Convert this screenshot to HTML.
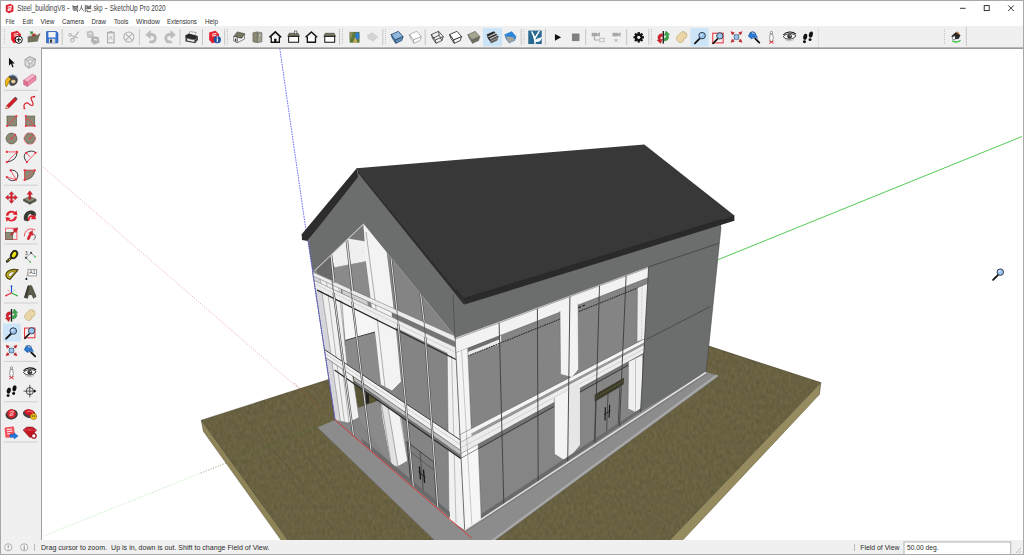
<!DOCTYPE html>
<html><head><meta charset="utf-8"><title>SketchUp</title>
<style>
html,body{margin:0;padding:0}
body{width:1024px;height:555px;overflow:hidden;position:relative;background:#fff;font-family:"Liberation Sans",sans-serif;}
.abs{position:absolute}
</style></head><body>
<div class="abs" style="left:0;top:0;width:1024px;height:26px;background:#fff"></div>
<div class="abs" style="left:0;top:26px;width:1024px;height:22px;background:#f0f0f0"></div>
<div class="abs" style="left:0;top:48px;width:41px;height:507px;background:#f0f0f0"></div>
<div class="abs" style="left:0;top:540px;width:1024px;height:15px;background:#f0f0f0"></div>
<div class="abs" style="left:0;top:47px;width:1024px;height:1px;background:#e3e3e3"></div><div class="abs" style="left:41px;top:47px;width:983px;height:1px;background:#b8b8b8"></div><div class="abs" style="left:41px;top:48px;width:983px;height:1px;background:#9a9a9a"></div>
<div class="abs" style="left:41px;top:48px;width:1px;height:492px;background:#a0a0a0"></div>
<svg width="1024" height="555" viewBox="0 0 1024 555" style="position:absolute;left:0;top:0">
<defs><clipPath id="woodclip"><polygon points="201.3,420.2 573.5,301.3 820.9,382.6 664.2,546.0 292.2,546.0"/></clipPath><clipPath id="vp"><rect x="42" y="49" width="980" height="491"/></clipPath>
<filter id="woodf" x="0" y="0" width="100%" height="100%" color-interpolation-filters="sRGB">
<feTurbulence type="fractalNoise" baseFrequency="0.35 0.2" numOctaves="2" seed="7" result="n"/>
<feColorMatrix in="n" type="matrix" values="0.10 0 0 0 0.36  0.095 0 0 0 0.333  0.06 0 0 0 0.225  0 0 0 0 1" result="c"/>
<feComposite in="c" in2="SourceGraphic" operator="in"/>
</filter>
</defs>
<g clip-path="url(#vp)">
<line x1="279.8" y1="48.6" x2="306.8" y2="236.0" stroke="#5b5bf0" stroke-width="0.9" stroke-dasharray="1.6 1"/>
<line x1="717.8" y1="259.8" x2="1024.0" y2="135.7" stroke="#55cc55" stroke-width="1.0" />
<line x1="41.0" y1="165.2" x2="335.0" y2="420.0" stroke="#ee8f8f" stroke-width="0.8" stroke-dasharray="1 1.6"/>
<line x1="41.0" y1="537.0" x2="201.0" y2="473.0" stroke="#9fe09f" stroke-width="0.8" stroke-dasharray="1 1.6"/>
<polygon points="201.3,420.2 573.5,301.3 820.9,382.6 664.2,546.0 292.2,546.0" fill="#625c3b" filter="url(#woodf)"/>
<g clip-path="url(#woodclip)">
<line x1="517.9" y1="587.8" x2="642.8" y2="699.0" stroke="#57513a" stroke-width="0.8" opacity="0.28"/>
<line x1="456.6" y1="678.3" x2="508.0" y2="739.4" stroke="#57513a" stroke-width="0.8" opacity="0.28"/>
<line x1="169.2" y1="356.8" x2="239.6" y2="447.8" stroke="#7a7350" stroke-width="0.8" opacity="0.28"/>
<line x1="237.8" y1="270.8" x2="305.2" y2="313.7" stroke="#7a7350" stroke-width="0.8" opacity="0.28"/>
<line x1="278.1" y1="304.4" x2="427.2" y2="403.1" stroke="#767050" stroke-width="0.8" opacity="0.28"/>
<line x1="672.4" y1="414.2" x2="729.2" y2="439.6" stroke="#767050" stroke-width="0.8" opacity="0.28"/>
<line x1="202.5" y1="198.4" x2="367.9" y2="268.0" stroke="#7a7350" stroke-width="0.8" opacity="0.28"/>
<line x1="562.7" y1="744.4" x2="607.7" y2="793.3" stroke="#7a7350" stroke-width="0.8" opacity="0.28"/>
<line x1="736.3" y1="525.1" x2="846.8" y2="586.3" stroke="#7a7350" stroke-width="0.8" opacity="0.28"/>
<line x1="768.8" y1="471.4" x2="833.6" y2="501.5" stroke="#767050" stroke-width="0.8" opacity="0.28"/>
<line x1="393.5" y1="338.6" x2="451.5" y2="371.3" stroke="#7a7350" stroke-width="0.8" opacity="0.28"/>
<line x1="382.1" y1="319.8" x2="532.9" y2="400.1" stroke="#57513a" stroke-width="0.8" opacity="0.28"/>
<line x1="509.7" y1="563.5" x2="548.1" y2="596.4" stroke="#5f593d" stroke-width="0.8" opacity="0.28"/>
<line x1="339.3" y1="526.2" x2="398.5" y2="594.6" stroke="#767050" stroke-width="0.8" opacity="0.28"/>
<line x1="266.0" y1="315.0" x2="331.6" y2="362.6" stroke="#57513a" stroke-width="0.8" opacity="0.28"/>
<line x1="254.1" y1="491.7" x2="315.5" y2="576.4" stroke="#767050" stroke-width="0.8" opacity="0.28"/>
<line x1="502.4" y1="432.0" x2="537.6" y2="453.9" stroke="#57513a" stroke-width="0.8" opacity="0.28"/>
<line x1="435.3" y1="563.6" x2="571.8" y2="699.6" stroke="#57513a" stroke-width="0.8" opacity="0.28"/>
<line x1="556.7" y1="722.9" x2="687.4" y2="861.7" stroke="#5f593d" stroke-width="0.8" opacity="0.28"/>
<line x1="629.9" y1="606.1" x2="693.5" y2="654.9" stroke="#767050" stroke-width="0.8" opacity="0.28"/>
<line x1="653.3" y1="378.1" x2="808.6" y2="441.2" stroke="#5f593d" stroke-width="0.8" opacity="0.28"/>
<line x1="786.7" y1="388.1" x2="838.2" y2="406.3" stroke="#5f593d" stroke-width="0.8" opacity="0.28"/>
<line x1="356.4" y1="396.6" x2="406.9" y2="435.4" stroke="#5f593d" stroke-width="0.8" opacity="0.28"/>
<line x1="333.7" y1="584.4" x2="387.7" y2="656.4" stroke="#5f593d" stroke-width="0.8" opacity="0.28"/>
<line x1="639.6" y1="481.3" x2="761.5" y2="550.7" stroke="#5f593d" stroke-width="0.8" opacity="0.28"/>
<line x1="170.1" y1="394.9" x2="196.9" y2="434.4" stroke="#767050" stroke-width="0.8" opacity="0.28"/>
<line x1="661.6" y1="341.6" x2="751.4" y2="372.9" stroke="#5f593d" stroke-width="0.8" opacity="0.28"/>
<line x1="398.7" y1="404.0" x2="438.6" y2="432.3" stroke="#57513a" stroke-width="0.8" opacity="0.28"/>
<line x1="280.8" y1="450.7" x2="329.3" y2="505.5" stroke="#7a7350" stroke-width="0.8" opacity="0.28"/>
<line x1="537.8" y1="610.6" x2="580.3" y2="648.7" stroke="#767050" stroke-width="0.8" opacity="0.28"/>
<line x1="214.9" y1="254.5" x2="305.8" y2="311.6" stroke="#7a7350" stroke-width="0.8" opacity="0.28"/>
<line x1="705.9" y1="619.8" x2="850.0" y2="721.5" stroke="#767050" stroke-width="0.8" opacity="0.28"/>
<line x1="376.3" y1="668.9" x2="429.1" y2="742.9" stroke="#5f593d" stroke-width="0.8" opacity="0.28"/>
<line x1="419.0" y1="349.9" x2="474.4" y2="380.7" stroke="#767050" stroke-width="0.8" opacity="0.28"/>
<line x1="359.9" y1="552.2" x2="404.8" y2="604.2" stroke="#767050" stroke-width="0.8" opacity="0.28"/>
<line x1="202.1" y1="386.2" x2="276.9" y2="478.4" stroke="#5f593d" stroke-width="0.8" opacity="0.28"/>
<line x1="689.8" y1="368.3" x2="780.6" y2="402.1" stroke="#57513a" stroke-width="0.8" opacity="0.28"/>
<line x1="303.4" y1="455.8" x2="407.8" y2="567.3" stroke="#5f593d" stroke-width="0.8" opacity="0.28"/>
<line x1="243.8" y1="423.2" x2="371.1" y2="573.4" stroke="#5f593d" stroke-width="0.8" opacity="0.28"/>
<line x1="245.5" y1="483.8" x2="285.4" y2="539.6" stroke="#57513a" stroke-width="0.8" opacity="0.28"/>
<line x1="579.9" y1="543.8" x2="654.5" y2="598.0" stroke="#5f593d" stroke-width="0.8" opacity="0.28"/>
<line x1="606.0" y1="555.5" x2="722.7" y2="639.0" stroke="#5f593d" stroke-width="0.8" opacity="0.28"/>
<line x1="542.8" y1="447.6" x2="678.0" y2="529.5" stroke="#767050" stroke-width="0.8" opacity="0.28"/>
<line x1="652.7" y1="515.5" x2="805.8" y2="608.6" stroke="#767050" stroke-width="0.8" opacity="0.28"/>
<line x1="469.9" y1="815.9" x2="540.2" y2="916.7" stroke="#7a7350" stroke-width="0.8" opacity="0.28"/>
<line x1="408.9" y1="310.3" x2="568.2" y2="386.5" stroke="#5f593d" stroke-width="0.8" opacity="0.28"/>
<line x1="484.9" y1="602.1" x2="597.3" y2="711.6" stroke="#7a7350" stroke-width="0.8" opacity="0.28"/>
<line x1="614.6" y1="669.2" x2="706.6" y2="750.3" stroke="#767050" stroke-width="0.8" opacity="0.28"/>
<line x1="501.5" y1="401.2" x2="657.1" y2="489.2" stroke="#5f593d" stroke-width="0.8" opacity="0.28"/>
<line x1="159.2" y1="291.7" x2="205.3" y2="338.4" stroke="#767050" stroke-width="0.8" opacity="0.28"/>
<line x1="245.3" y1="345.5" x2="365.8" y2="453.0" stroke="#7a7350" stroke-width="0.8" opacity="0.28"/>
<line x1="177.1" y1="286.4" x2="262.9" y2="363.6" stroke="#7a7350" stroke-width="0.8" opacity="0.28"/>
<line x1="727.2" y1="442.4" x2="779.8" y2="466.2" stroke="#7a7350" stroke-width="0.8" opacity="0.28"/>
<line x1="459.5" y1="460.4" x2="545.2" y2="523.5" stroke="#5f593d" stroke-width="0.8" opacity="0.28"/>
<line x1="517.5" y1="448.5" x2="631.0" y2="520.7" stroke="#7a7350" stroke-width="0.8" opacity="0.28"/>
<line x1="317.9" y1="451.4" x2="385.5" y2="519.7" stroke="#5f593d" stroke-width="0.8" opacity="0.28"/>
<line x1="488.0" y1="728.7" x2="583.5" y2="844.6" stroke="#5f593d" stroke-width="0.8" opacity="0.28"/>
<line x1="322.5" y1="596.4" x2="373.5" y2="668.4" stroke="#5f593d" stroke-width="0.8" opacity="0.28"/>
<line x1="338.2" y1="395.4" x2="441.9" y2="478.5" stroke="#5f593d" stroke-width="0.8" opacity="0.28"/>
<line x1="313.0" y1="495.9" x2="424.4" y2="624.5" stroke="#5f593d" stroke-width="0.8" opacity="0.28"/>
<line x1="256.5" y1="306.7" x2="338.7" y2="365.8" stroke="#767050" stroke-width="0.8" opacity="0.28"/>
<line x1="483.1" y1="815.6" x2="563.1" y2="927.3" stroke="#5f593d" stroke-width="0.8" opacity="0.28"/>
<line x1="415.3" y1="615.9" x2="481.4" y2="692.4" stroke="#5f593d" stroke-width="0.8" opacity="0.28"/>
<line x1="472.4" y1="514.4" x2="520.7" y2="554.1" stroke="#767050" stroke-width="0.8" opacity="0.28"/>
<line x1="701.9" y1="599.8" x2="800.1" y2="666.8" stroke="#767050" stroke-width="0.8" opacity="0.28"/>
<line x1="256.3" y1="507.8" x2="367.6" y2="666.4" stroke="#7a7350" stroke-width="0.8" opacity="0.28"/>
<line x1="288.9" y1="373.8" x2="438.3" y2="502.1" stroke="#767050" stroke-width="0.8" opacity="0.28"/>
<line x1="204.0" y1="222.5" x2="373.6" y2="310.9" stroke="#5f593d" stroke-width="0.8" opacity="0.28"/>
<line x1="320.8" y1="361.6" x2="414.0" y2="431.1" stroke="#57513a" stroke-width="0.8" opacity="0.28"/>
<line x1="609.7" y1="698.4" x2="667.6" y2="752.5" stroke="#57513a" stroke-width="0.8" opacity="0.28"/>
<line x1="500.9" y1="683.4" x2="529.2" y2="714.6" stroke="#5f593d" stroke-width="0.8" opacity="0.28"/>
<line x1="467.3" y1="356.6" x2="508.1" y2="377.6" stroke="#767050" stroke-width="0.8" opacity="0.28"/>
<line x1="280.1" y1="266.5" x2="454.8" y2="360.1" stroke="#5f593d" stroke-width="0.8" opacity="0.28"/>
<line x1="688.6" y1="636.0" x2="787.2" y2="709.5" stroke="#57513a" stroke-width="0.8" opacity="0.28"/>
<line x1="285.6" y1="206.9" x2="366.3" y2="234.1" stroke="#5f593d" stroke-width="0.8" opacity="0.28"/>
<line x1="515.8" y1="579.9" x2="549.0" y2="609.1" stroke="#5f593d" stroke-width="0.8" opacity="0.28"/>
<line x1="595.6" y1="487.0" x2="710.0" y2="557.8" stroke="#57513a" stroke-width="0.8" opacity="0.28"/>
<line x1="550.4" y1="290.5" x2="692.7" y2="337.0" stroke="#57513a" stroke-width="0.8" opacity="0.28"/>
<line x1="345.4" y1="575.8" x2="371.6" y2="609.0" stroke="#767050" stroke-width="0.8" opacity="0.28"/>
<line x1="500.8" y1="555.2" x2="647.0" y2="680.5" stroke="#767050" stroke-width="0.8" opacity="0.28"/>
<line x1="476.4" y1="717.0" x2="550.1" y2="806.7" stroke="#7a7350" stroke-width="0.8" opacity="0.28"/>
<line x1="309.8" y1="537.2" x2="408.8" y2="664.5" stroke="#5f593d" stroke-width="0.8" opacity="0.28"/>
<line x1="424.0" y1="636.6" x2="494.5" y2="720.1" stroke="#5f593d" stroke-width="0.8" opacity="0.28"/>
<line x1="380.8" y1="478.4" x2="446.8" y2="539.2" stroke="#7a7350" stroke-width="0.8" opacity="0.28"/>
<line x1="460.9" y1="459.3" x2="557.4" y2="529.9" stroke="#5f593d" stroke-width="0.8" opacity="0.28"/>
<line x1="383.5" y1="428.4" x2="482.6" y2="507.1" stroke="#57513a" stroke-width="0.8" opacity="0.28"/>
<line x1="345.0" y1="241.6" x2="505.2" y2="301.8" stroke="#57513a" stroke-width="0.8" opacity="0.28"/>
<line x1="165.3" y1="283.6" x2="278.7" y2="390.1" stroke="#57513a" stroke-width="0.8" opacity="0.28"/>
<line x1="366.3" y1="685.7" x2="393.1" y2="725.3" stroke="#57513a" stroke-width="0.8" opacity="0.28"/>
<line x1="571.2" y1="398.1" x2="743.6" y2="483.4" stroke="#7a7350" stroke-width="0.8" opacity="0.28"/>
<line x1="369.6" y1="687.0" x2="431.6" y2="778.0" stroke="#7a7350" stroke-width="0.8" opacity="0.28"/>
<line x1="361.5" y1="442.9" x2="411.0" y2="486.3" stroke="#7a7350" stroke-width="0.8" opacity="0.28"/>
<line x1="272.7" y1="208.8" x2="367.5" y2="242.6" stroke="#57513a" stroke-width="0.8" opacity="0.28"/>
<line x1="516.2" y1="398.7" x2="568.0" y2="426.9" stroke="#767050" stroke-width="0.8" opacity="0.28"/>
<line x1="181.5" y1="364.6" x2="249.6" y2="449.8" stroke="#5f593d" stroke-width="0.8" opacity="0.28"/>
<line x1="379.4" y1="496.0" x2="448.7" y2="563.1" stroke="#5f593d" stroke-width="0.8" opacity="0.28"/>
<line x1="176.7" y1="371.6" x2="229.4" y2="441.0" stroke="#5f593d" stroke-width="0.8" opacity="0.28"/>
<line x1="341.9" y1="586.1" x2="426.6" y2="696.8" stroke="#5f593d" stroke-width="0.8" opacity="0.28"/>
<line x1="348.9" y1="241.5" x2="511.2" y2="301.9" stroke="#5f593d" stroke-width="0.8" opacity="0.28"/>
<line x1="237.8" y1="306.8" x2="299.2" y2="354.1" stroke="#5f593d" stroke-width="0.8" opacity="0.28"/>
<line x1="381.7" y1="391.0" x2="431.5" y2="426.2" stroke="#57513a" stroke-width="0.8" opacity="0.28"/>
<line x1="194.8" y1="308.9" x2="302.4" y2="408.8" stroke="#57513a" stroke-width="0.8" opacity="0.28"/>
<line x1="337.0" y1="549.9" x2="408.1" y2="637.1" stroke="#767050" stroke-width="0.8" opacity="0.28"/>
<line x1="322.4" y1="540.0" x2="379.7" y2="611.6" stroke="#57513a" stroke-width="0.8" opacity="0.28"/>
<line x1="361.8" y1="412.9" x2="499.1" y2="522.6" stroke="#767050" stroke-width="0.8" opacity="0.28"/>
<line x1="255.7" y1="374.8" x2="297.9" y2="415.4" stroke="#767050" stroke-width="0.8" opacity="0.28"/>
<line x1="193.8" y1="359.0" x2="285.3" y2="464.9" stroke="#5f593d" stroke-width="0.8" opacity="0.28"/>
<line x1="254.2" y1="435.6" x2="376.2" y2="579.8" stroke="#5f593d" stroke-width="0.8" opacity="0.28"/>
<line x1="301.1" y1="470.9" x2="404.8" y2="587.0" stroke="#5f593d" stroke-width="0.8" opacity="0.28"/>
<line x1="539.8" y1="624.4" x2="620.2" y2="698.4" stroke="#5f593d" stroke-width="0.8" opacity="0.28"/>
<line x1="473.8" y1="489.1" x2="578.1" y2="569.6" stroke="#7a7350" stroke-width="0.8" opacity="0.28"/>
<line x1="233.5" y1="271.6" x2="271.4" y2="296.3" stroke="#7a7350" stroke-width="0.8" opacity="0.28"/>
<line x1="484.4" y1="345.2" x2="656.0" y2="426.7" stroke="#5f593d" stroke-width="0.8" opacity="0.28"/>
<line x1="499.4" y1="272.9" x2="672.8" y2="329.3" stroke="#767050" stroke-width="0.8" opacity="0.28"/>
<line x1="446.1" y1="378.5" x2="507.2" y2="414.1" stroke="#7a7350" stroke-width="0.8" opacity="0.28"/>
<line x1="733.3" y1="389.1" x2="900.7" y2="452.4" stroke="#767050" stroke-width="0.8" opacity="0.28"/>
<line x1="350.9" y1="268.4" x2="428.1" y2="302.4" stroke="#7a7350" stroke-width="0.8" opacity="0.28"/>
<line x1="443.6" y1="599.3" x2="474.8" y2="632.2" stroke="#57513a" stroke-width="0.8" opacity="0.28"/>
<line x1="603.7" y1="482.4" x2="681.3" y2="529.2" stroke="#57513a" stroke-width="0.8" opacity="0.28"/>
<line x1="464.8" y1="580.1" x2="547.7" y2="660.5" stroke="#7a7350" stroke-width="0.8" opacity="0.28"/>
<line x1="603.5" y1="362.8" x2="683.5" y2="395.9" stroke="#7a7350" stroke-width="0.8" opacity="0.28"/>
<line x1="219.6" y1="355.9" x2="270.0" y2="407.6" stroke="#57513a" stroke-width="0.8" opacity="0.28"/>
<line x1="490.6" y1="534.5" x2="597.2" y2="623.5" stroke="#5f593d" stroke-width="0.8" opacity="0.28"/>
<line x1="237.7" y1="357.3" x2="308.3" y2="425.1" stroke="#57513a" stroke-width="0.8" opacity="0.28"/>
<line x1="470.4" y1="615.0" x2="516.4" y2="662.5" stroke="#7a7350" stroke-width="0.8" opacity="0.28"/>
<line x1="321.5" y1="262.0" x2="364.2" y2="281.6" stroke="#767050" stroke-width="0.8" opacity="0.28"/>
<line x1="269.0" y1="405.4" x2="348.7" y2="486.7" stroke="#767050" stroke-width="0.8" opacity="0.28"/>
<line x1="319.3" y1="482.6" x2="351.1" y2="517.4" stroke="#5f593d" stroke-width="0.8" opacity="0.28"/>
<line x1="394.7" y1="677.9" x2="440.8" y2="740.6" stroke="#767050" stroke-width="0.8" opacity="0.28"/>
<line x1="488.6" y1="304.8" x2="627.5" y2="359.5" stroke="#57513a" stroke-width="0.8" opacity="0.28"/>
<line x1="577.2" y1="556.1" x2="615.3" y2="584.8" stroke="#767050" stroke-width="0.8" opacity="0.28"/>
<line x1="517.2" y1="482.6" x2="664.8" y2="585.8" stroke="#7a7350" stroke-width="0.8" opacity="0.28"/>
<line x1="498.0" y1="344.7" x2="592.7" y2="388.5" stroke="#7a7350" stroke-width="0.8" opacity="0.28"/>
<line x1="394.3" y1="265.2" x2="447.7" y2="285.9" stroke="#7a7350" stroke-width="0.8" opacity="0.28"/>
<line x1="582.4" y1="627.5" x2="638.7" y2="676.0" stroke="#57513a" stroke-width="0.8" opacity="0.28"/>
<line x1="367.3" y1="376.1" x2="455.8" y2="437.5" stroke="#767050" stroke-width="0.8" opacity="0.28"/>
<line x1="236.5" y1="307.3" x2="269.7" y2="333.1" stroke="#5f593d" stroke-width="0.8" opacity="0.28"/>
<line x1="566.0" y1="678.9" x2="709.4" y2="818.3" stroke="#57513a" stroke-width="0.8" opacity="0.28"/>
<line x1="489.2" y1="323.9" x2="640.6" y2="389.0" stroke="#5f593d" stroke-width="0.8" opacity="0.28"/>
<line x1="267.6" y1="443.9" x2="307.4" y2="489.8" stroke="#57513a" stroke-width="0.8" opacity="0.28"/>
<line x1="540.4" y1="513.5" x2="676.3" y2="612.0" stroke="#7a7350" stroke-width="0.8" opacity="0.28"/>
<line x1="472.2" y1="372.9" x2="542.4" y2="411.0" stroke="#7a7350" stroke-width="0.8" opacity="0.28"/>
<line x1="519.5" y1="715.6" x2="640.4" y2="851.2" stroke="#57513a" stroke-width="0.8" opacity="0.28"/>
<line x1="347.5" y1="354.8" x2="480.5" y2="444.4" stroke="#57513a" stroke-width="0.8" opacity="0.28"/>
<line x1="386.2" y1="633.4" x2="485.5" y2="760.8" stroke="#57513a" stroke-width="0.8" opacity="0.28"/>
<line x1="612.2" y1="546.7" x2="731.2" y2="629.4" stroke="#57513a" stroke-width="0.8" opacity="0.28"/>
<line x1="464.2" y1="605.8" x2="522.1" y2="665.1" stroke="#767050" stroke-width="0.8" opacity="0.28"/>
<line x1="325.8" y1="391.9" x2="394.6" y2="448.4" stroke="#7a7350" stroke-width="0.8" opacity="0.28"/>
<line x1="579.8" y1="424.4" x2="655.4" y2="464.6" stroke="#57513a" stroke-width="0.8" opacity="0.28"/>
<line x1="541.7" y1="556.7" x2="576.4" y2="584.5" stroke="#57513a" stroke-width="0.8" opacity="0.28"/>
<line x1="285.6" y1="215.0" x2="376.9" y2="248.1" stroke="#5f593d" stroke-width="0.8" opacity="0.28"/>
<line x1="351.1" y1="625.5" x2="396.3" y2="687.9" stroke="#767050" stroke-width="0.8" opacity="0.28"/>
<line x1="322.1" y1="248.3" x2="411.9" y2="286.0" stroke="#7a7350" stroke-width="0.8" opacity="0.28"/>
<line x1="572.4" y1="609.4" x2="691.8" y2="710.3" stroke="#57513a" stroke-width="0.8" opacity="0.28"/>
<line x1="538.5" y1="405.2" x2="662.7" y2="471.7" stroke="#7a7350" stroke-width="0.8" opacity="0.28"/>
<line x1="675.9" y1="593.8" x2="812.9" y2="689.5" stroke="#57513a" stroke-width="0.8" opacity="0.28"/>
<line x1="435.3" y1="376.4" x2="501.1" y2="415.4" stroke="#767050" stroke-width="0.8" opacity="0.28"/>
<line x1="227.1" y1="217.8" x2="360.7" y2="278.8" stroke="#7a7350" stroke-width="0.8" opacity="0.28"/>
<line x1="662.4" y1="645.8" x2="768.7" y2="729.6" stroke="#57513a" stroke-width="0.8" opacity="0.28"/>
<line x1="711.0" y1="412.4" x2="848.9" y2="470.4" stroke="#7a7350" stroke-width="0.8" opacity="0.28"/>
<line x1="126.0" y1="323.7" x2="201.6" y2="432.3" stroke="#767050" stroke-width="0.8" opacity="0.28"/>
<line x1="311.8" y1="439.4" x2="392.9" y2="519.9" stroke="#7a7350" stroke-width="0.8" opacity="0.28"/>
<line x1="305.5" y1="282.8" x2="419.7" y2="344.9" stroke="#5f593d" stroke-width="0.8" opacity="0.28"/>
<line x1="489.1" y1="657.6" x2="556.3" y2="729.8" stroke="#7a7350" stroke-width="0.8" opacity="0.28"/>
<line x1="418.3" y1="614.5" x2="540.1" y2="754.3" stroke="#57513a" stroke-width="0.8" opacity="0.28"/>
<line x1="353.4" y1="439.2" x2="400.6" y2="480.9" stroke="#7a7350" stroke-width="0.8" opacity="0.28"/>
<line x1="191.3" y1="264.8" x2="245.2" y2="304.8" stroke="#57513a" stroke-width="0.8" opacity="0.28"/>
<line x1="268.3" y1="415.8" x2="396.9" y2="552.0" stroke="#5f593d" stroke-width="0.8" opacity="0.28"/>
<line x1="419.7" y1="428.6" x2="521.0" y2="502.5" stroke="#57513a" stroke-width="0.8" opacity="0.28"/>
<line x1="299.3" y1="471.0" x2="327.0" y2="502.1" stroke="#7a7350" stroke-width="0.8" opacity="0.28"/>
<line x1="144.8" y1="300.3" x2="242.4" y2="412.2" stroke="#5f593d" stroke-width="0.8" opacity="0.28"/>
<line x1="427.7" y1="451.6" x2="528.7" y2="529.2" stroke="#767050" stroke-width="0.8" opacity="0.28"/>
<line x1="594.5" y1="539.0" x2="703.0" y2="615.3" stroke="#57513a" stroke-width="0.8" opacity="0.28"/>
<line x1="573.8" y1="578.7" x2="650.7" y2="639.6" stroke="#57513a" stroke-width="0.8" opacity="0.28"/>
<line x1="396.3" y1="509.1" x2="458.0" y2="568.3" stroke="#57513a" stroke-width="0.8" opacity="0.28"/>
<line x1="682.7" y1="346.6" x2="812.9" y2="391.5" stroke="#767050" stroke-width="0.8" opacity="0.28"/>
<line x1="713.1" y1="523.6" x2="786.0" y2="565.1" stroke="#7a7350" stroke-width="0.8" opacity="0.28"/>
<line x1="662.8" y1="362.9" x2="800.4" y2="415.0" stroke="#5f593d" stroke-width="0.8" opacity="0.28"/>
<line x1="399.2" y1="650.9" x2="506.2" y2="788.3" stroke="#7a7350" stroke-width="0.8" opacity="0.28"/>
<line x1="220.5" y1="284.6" x2="268.3" y2="319.8" stroke="#5f593d" stroke-width="0.8" opacity="0.28"/>
<line x1="316.9" y1="595.6" x2="375.9" y2="680.0" stroke="#57513a" stroke-width="0.8" opacity="0.28"/>
<line x1="330.5" y1="442.2" x2="446.7" y2="552.5" stroke="#7a7350" stroke-width="0.8" opacity="0.28"/>
<line x1="365.2" y1="616.3" x2="427.1" y2="697.2" stroke="#57513a" stroke-width="0.8" opacity="0.28"/>
<line x1="502.8" y1="735.7" x2="599.2" y2="850.7" stroke="#5f593d" stroke-width="0.8" opacity="0.28"/>
<line x1="250.5" y1="246.3" x2="327.8" y2="286.4" stroke="#5f593d" stroke-width="0.8" opacity="0.28"/>
<line x1="171.0" y1="325.5" x2="298.8" y2="468.9" stroke="#57513a" stroke-width="0.8" opacity="0.28"/>
<line x1="526.6" y1="602.1" x2="583.0" y2="653.0" stroke="#57513a" stroke-width="0.8" opacity="0.28"/>
<line x1="477.0" y1="520.4" x2="586.6" y2="611.3" stroke="#767050" stroke-width="0.8" opacity="0.28"/>
<line x1="408.3" y1="394.2" x2="511.8" y2="463.6" stroke="#7a7350" stroke-width="0.8" opacity="0.28"/>
<line x1="347.5" y1="313.9" x2="466.6" y2="381.3" stroke="#5f593d" stroke-width="0.8" opacity="0.28"/>
<line x1="215.3" y1="215.5" x2="268.3" y2="240.3" stroke="#7a7350" stroke-width="0.8" opacity="0.28"/>
<line x1="351.8" y1="362.5" x2="398.2" y2="394.5" stroke="#5f593d" stroke-width="0.8" opacity="0.28"/>
<line x1="173.5" y1="308.5" x2="255.6" y2="392.6" stroke="#57513a" stroke-width="0.8" opacity="0.28"/>
<line x1="665.5" y1="503.6" x2="789.4" y2="575.4" stroke="#7a7350" stroke-width="0.8" opacity="0.28"/>
<line x1="371.6" y1="612.8" x2="474.9" y2="744.8" stroke="#57513a" stroke-width="0.8" opacity="0.28"/>
<line x1="624.2" y1="314.0" x2="679.2" y2="331.9" stroke="#5f593d" stroke-width="0.8" opacity="0.28"/>
<line x1="566.0" y1="363.1" x2="618.0" y2="386.0" stroke="#767050" stroke-width="0.8" opacity="0.28"/>
<line x1="513.5" y1="662.3" x2="630.7" y2="783.5" stroke="#57513a" stroke-width="0.8" opacity="0.28"/>
<line x1="632.7" y1="512.6" x2="693.2" y2="550.2" stroke="#5f593d" stroke-width="0.8" opacity="0.28"/>
<line x1="434.7" y1="393.3" x2="560.6" y2="472.7" stroke="#57513a" stroke-width="0.8" opacity="0.28"/>
<line x1="736.6" y1="496.9" x2="838.4" y2="549.5" stroke="#57513a" stroke-width="0.8" opacity="0.28"/>
<line x1="560.7" y1="344.9" x2="653.0" y2="383.0" stroke="#57513a" stroke-width="0.8" opacity="0.28"/>
<line x1="672.0" y1="626.0" x2="825.0" y2="740.6" stroke="#57513a" stroke-width="0.8" opacity="0.28"/>
<line x1="660.6" y1="614.0" x2="784.1" y2="705.9" stroke="#57513a" stroke-width="0.8" opacity="0.28"/>
<line x1="489.9" y1="315.3" x2="579.2" y2="352.2" stroke="#7a7350" stroke-width="0.8" opacity="0.28"/>
<line x1="271.6" y1="498.5" x2="323.8" y2="567.5" stroke="#767050" stroke-width="0.8" opacity="0.28"/>
<line x1="523.2" y1="605.5" x2="563.2" y2="642.0" stroke="#57513a" stroke-width="0.8" opacity="0.28"/>
<line x1="380.2" y1="330.1" x2="533.5" y2="416.0" stroke="#767050" stroke-width="0.8" opacity="0.28"/>
<line x1="463.2" y1="279.3" x2="536.6" y2="305.9" stroke="#57513a" stroke-width="0.8" opacity="0.28"/>
<line x1="776.7" y1="452.0" x2="894.5" y2="503.4" stroke="#767050" stroke-width="0.8" opacity="0.28"/>
<line x1="312.6" y1="596.5" x2="370.4" y2="680.3" stroke="#7a7350" stroke-width="0.8" opacity="0.28"/>
<line x1="418.8" y1="277.3" x2="576.7" y2="339.5" stroke="#57513a" stroke-width="0.8" opacity="0.28"/>
<line x1="194.7" y1="359.1" x2="305.8" y2="487.3" stroke="#57513a" stroke-width="0.8" opacity="0.28"/>
<line x1="456.8" y1="354.2" x2="546.6" y2="401.0" stroke="#57513a" stroke-width="0.8" opacity="0.28"/>
<line x1="339.4" y1="235.2" x2="523.4" y2="302.3" stroke="#767050" stroke-width="0.8" opacity="0.28"/>
<line x1="528.2" y1="287.1" x2="711.3" y2="348.2" stroke="#767050" stroke-width="0.8" opacity="0.28"/>
<line x1="197.3" y1="273.4" x2="279.1" y2="335.7" stroke="#767050" stroke-width="0.8" opacity="0.28"/>
<line x1="516.4" y1="767.0" x2="608.8" y2="879.8" stroke="#57513a" stroke-width="0.8" opacity="0.28"/>
<line x1="441.2" y1="332.3" x2="581.0" y2="401.0" stroke="#767050" stroke-width="0.8" opacity="0.28"/>
<line x1="271.0" y1="496.0" x2="391.9" y2="655.2" stroke="#7a7350" stroke-width="0.8" opacity="0.28"/>
<line x1="184.8" y1="373.5" x2="286.6" y2="503.3" stroke="#767050" stroke-width="0.8" opacity="0.28"/>
<line x1="165.0" y1="329.7" x2="229.1" y2="405.3" stroke="#767050" stroke-width="0.8" opacity="0.28"/>
<line x1="324.2" y1="339.4" x2="419.7" y2="403.8" stroke="#5f593d" stroke-width="0.8" opacity="0.28"/>
<line x1="600.0" y1="306.5" x2="755.0" y2="357.1" stroke="#767050" stroke-width="0.8" opacity="0.28"/>
<line x1="621.9" y1="349.8" x2="664.6" y2="366.2" stroke="#767050" stroke-width="0.8" opacity="0.28"/>
<line x1="205.4" y1="397.2" x2="232.1" y2="430.9" stroke="#767050" stroke-width="0.8" opacity="0.28"/>
<line x1="342.2" y1="621.5" x2="378.0" y2="671.8" stroke="#7a7350" stroke-width="0.8" opacity="0.28"/>
<line x1="426.0" y1="275.1" x2="555.8" y2="324.7" stroke="#57513a" stroke-width="0.8" opacity="0.28"/>
<line x1="450.2" y1="324.7" x2="525.1" y2="359.7" stroke="#5f593d" stroke-width="0.8" opacity="0.28"/>
<line x1="305.9" y1="299.8" x2="380.7" y2="344.3" stroke="#57513a" stroke-width="0.8" opacity="0.28"/>
<line x1="250.4" y1="254.5" x2="341.5" y2="304.5" stroke="#5f593d" stroke-width="0.8" opacity="0.28"/>
<line x1="446.3" y1="398.1" x2="559.1" y2="468.6" stroke="#7a7350" stroke-width="0.8" opacity="0.28"/>
<line x1="168.4" y1="379.5" x2="193.1" y2="414.4" stroke="#57513a" stroke-width="0.8" opacity="0.28"/>
<line x1="205.9" y1="342.5" x2="287.4" y2="426.3" stroke="#57513a" stroke-width="0.8" opacity="0.28"/>
<line x1="684.2" y1="337.0" x2="785.8" y2="370.6" stroke="#7a7350" stroke-width="0.8" opacity="0.28"/>
<line x1="162.2" y1="314.3" x2="242.3" y2="403.7" stroke="#57513a" stroke-width="0.8" opacity="0.28"/>
<line x1="561.2" y1="677.0" x2="678.7" y2="791.7" stroke="#5f593d" stroke-width="0.8" opacity="0.28"/>
<line x1="231.3" y1="281.3" x2="280.4" y2="315.3" stroke="#5f593d" stroke-width="0.8" opacity="0.28"/>
<line x1="301.6" y1="374.6" x2="404.3" y2="459.6" stroke="#767050" stroke-width="0.8" opacity="0.28"/>
<line x1="223.4" y1="468.9" x2="261.1" y2="523.9" stroke="#57513a" stroke-width="0.8" opacity="0.28"/>
<line x1="181.8" y1="294.1" x2="236.3" y2="344.1" stroke="#767050" stroke-width="0.8" opacity="0.28"/>
<line x1="513.2" y1="317.2" x2="671.8" y2="380.5" stroke="#5f593d" stroke-width="0.8" opacity="0.28"/>
<line x1="191.5" y1="359.4" x2="253.9" y2="432.6" stroke="#767050" stroke-width="0.8" opacity="0.28"/>
<line x1="557.4" y1="293.2" x2="681.6" y2="333.9" stroke="#57513a" stroke-width="0.8" opacity="0.28"/>
<line x1="259.1" y1="207.4" x2="348.0" y2="240.3" stroke="#7a7350" stroke-width="0.8" opacity="0.28"/>
<line x1="369.9" y1="352.4" x2="514.1" y2="443.2" stroke="#767050" stroke-width="0.8" opacity="0.28"/>
<line x1="462.7" y1="642.9" x2="517.8" y2="703.6" stroke="#57513a" stroke-width="0.8" opacity="0.28"/>
<line x1="345.8" y1="435.9" x2="450.7" y2="529.5" stroke="#7a7350" stroke-width="0.8" opacity="0.28"/>
<line x1="422.4" y1="547.3" x2="550.4" y2="673.9" stroke="#7a7350" stroke-width="0.8" opacity="0.28"/>
<line x1="440.2" y1="502.7" x2="580.2" y2="622.5" stroke="#5f593d" stroke-width="0.8" opacity="0.28"/>
<line x1="169.2" y1="263.4" x2="205.5" y2="293.1" stroke="#767050" stroke-width="0.8" opacity="0.28"/>
<line x1="457.7" y1="564.7" x2="489.7" y2="595.2" stroke="#767050" stroke-width="0.8" opacity="0.28"/>
<line x1="635.2" y1="375.6" x2="762.6" y2="428.3" stroke="#7a7350" stroke-width="0.8" opacity="0.28"/>
<line x1="521.7" y1="537.2" x2="641.5" y2="632.1" stroke="#57513a" stroke-width="0.8" opacity="0.28"/>
<line x1="644.8" y1="341.1" x2="728.2" y2="370.9" stroke="#57513a" stroke-width="0.8" opacity="0.28"/>
<line x1="374.3" y1="663.2" x2="423.1" y2="731.2" stroke="#767050" stroke-width="0.8" opacity="0.28"/>
<line x1="257.9" y1="405.2" x2="318.1" y2="469.0" stroke="#57513a" stroke-width="0.8" opacity="0.28"/>
<line x1="257.9" y1="460.3" x2="348.5" y2="573.8" stroke="#767050" stroke-width="0.8" opacity="0.28"/>
<line x1="256.1" y1="305.8" x2="316.7" y2="349.3" stroke="#5f593d" stroke-width="0.8" opacity="0.28"/>
<line x1="532.1" y1="424.4" x2="630.2" y2="480.9" stroke="#7a7350" stroke-width="0.8" opacity="0.28"/>
</g>
<line x1="201.0" y1="473.0" x2="335.0" y2="420.0" stroke="#4f7a3a" stroke-width="0.7" stroke-dasharray="1 1.6"/>
<line x1="294.0" y1="383.0" x2="335.0" y2="420.0" stroke="#a04a3a" stroke-width="0.7" stroke-dasharray="1 1.6"/>
<polygon points="201.3,420.2 203.5,431.5 285.3,546.0 292.2,546.0" fill="#8e8458" />
<polygon points="820.9,382.6 819.3,394.6 677.2,546.0 664.2,546.0" fill="#958b5e" />
<line x1="201.3" y1="420.2" x2="292.2" y2="546.0" stroke="#3a3520" stroke-width="0.6" />
<line x1="820.9" y1="382.6" x2="664.2" y2="546.0" stroke="#3a3520" stroke-width="0.6" />
<line x1="203.5" y1="431.5" x2="285.3" y2="546.0" stroke="#5a5335" stroke-width="0.5" />
<line x1="819.3" y1="394.6" x2="677.2" y2="546.0" stroke="#5a5335" stroke-width="0.5" />
<line x1="201.3" y1="420.2" x2="203.5" y2="431.5" stroke="#3a3520" stroke-width="0.5" />
<line x1="820.9" y1="382.6" x2="819.3" y2="394.6" stroke="#3a3520" stroke-width="0.5" />
<line x1="201.3" y1="420.2" x2="330.0" y2="379.0" stroke="#3a3520" stroke-width="0.4" />
<line x1="708.0" y1="346.0" x2="820.9" y2="382.6" stroke="#3a3520" stroke-width="0.4" />
<polygon points="317.3,427.5 335.0,420.0 706.0,372.0 718.7,376.0 483.6,547.5 441.7,547.5" fill="#8c8c8c" />
<polygon points="718.7,376.0 716.0,374.5 481.0,547.5 485.6,547.5" fill="#a8a8a8" />
<line x1="317.3" y1="427.5" x2="441.7" y2="547.5" stroke="#555" stroke-width="0.5" />
<line x1="718.7" y1="376.0" x2="485.6" y2="547.5" stroke="#555" stroke-width="0.5" />
<polygon points="335.1,420.0 464.7,530.0 454.8,336.0 363.4,223.6 312.6,272.0" fill="#848484" />
<polygon points="316.0,269.0 331.0,254.6 333.0,281.0 318.0,275.0" fill="#6a6a6a" />
<polygon points="331.0,254.6 363.0,224.5 367.7,261.1 334.6,267.6" fill="#efefef" />
<polygon points="348.0,238.5 363.0,224.5 365.8,241.5" fill="#777" />
<polygon points="334.6,267.6 367.7,261.1 373.0,298.0 332.0,281.0" fill="#8a8a8a" />
<line x1="334.6" y1="267.6" x2="367.7" y2="261.1" stroke="#aaa" stroke-width="0.5" />
<polygon points="341.0,300.0 376.0,315.0 375.6,331.8 345.3,340.4" fill="#f6f6f6" />
<polygon points="345.3,340.4 375.6,331.8 381.0,388.0 347.0,366.0" fill="#8a8a8a" />
<line x1="345.3" y1="340.4" x2="375.6" y2="331.8" stroke="#444" stroke-width="1.0" />
<polygon points="350.0,373.0 379.0,392.0 380.5,400.0 358.0,408.0 353.0,378.0" fill="#575234" />
<polygon points="366.0,383.0 369.0,385.0 369.0,403.0 366.0,404.0" fill="#222" />
<polygon points="358.0,408.0 380.5,400.0 392.0,466.0 360.0,420.0" fill="#8a8a8a" />
<polygon points="312.6,272.0 338.5,283.5 341.0,290.0 345.3,346.0 347.0,364.0 353.0,378.0 359.0,417.6 348.0,423.0 335.1,420.0" fill="#f0f0f0" />
<polygon points="312.6,272.0 319.5,275.0 340.5,421.7 335.1,420.0" fill="#d6d6da" />
<line x1="319.5" y1="275.0" x2="340.5" y2="421.7" stroke="#7a7a7a" stroke-width="0.5" />
<line x1="326.0" y1="278.0" x2="344.5" y2="422.5" stroke="#7a7a7a" stroke-width="0.5" />
<line x1="332.0" y1="281.0" x2="349.0" y2="422.5" stroke="#7a7a7a" stroke-width="0.5" />
<line x1="338.5" y1="285.0" x2="347.0" y2="364.0" stroke="#7a7a7a" stroke-width="0.5" />
<line x1="341.0" y1="290.0" x2="345.3" y2="346.0" stroke="#666" stroke-width="0.5" />
<line x1="353.0" y1="378.0" x2="359.0" y2="417.6" stroke="#666" stroke-width="0.5" />
<line x1="335.1" y1="420.0" x2="348.0" y2="423.0" stroke="#666" stroke-width="0.5" />
<line x1="348.0" y1="423.0" x2="359.0" y2="417.6" stroke="#666" stroke-width="0.5" />
<polygon points="363.4,223.6 386.5,251.0 392.0,295.0 397.0,340.0 401.0,382.0 392.0,391.0 381.0,385.0 376.0,340.0 366.0,262.0" fill="#f3f3f3" />
<line x1="366.0" y1="232.0" x2="375.0" y2="300.0" stroke="#666" stroke-width="0.5" />
<line x1="375.0" y1="300.0" x2="385.0" y2="387.0" stroke="#666" stroke-width="0.5" />
<line x1="381.0" y1="385.0" x2="392.0" y2="391.0" stroke="#555" stroke-width="0.5" />
<line x1="392.0" y1="391.0" x2="401.0" y2="382.0" stroke="#555" stroke-width="0.5" />
<polygon points="379.0,389.0 397.0,398.0 401.5,420.0 407.6,461.0 398.0,466.5 391.5,466.0 383.0,420.0" fill="#f3f3f3" />
<polygon points="379.0,389.0 385.5,392.0 398.0,466.5 391.5,466.0 383.0,420.0" fill="#e2e2e2" />
<line x1="385.5" y1="392.0" x2="398.0" y2="466.5" stroke="#666" stroke-width="0.5" />
<line x1="379.0" y1="389.0" x2="391.5" y2="466.0" stroke="#666" stroke-width="0.5" />
<line x1="397.0" y1="398.0" x2="407.6" y2="461.0" stroke="#666" stroke-width="0.5" />
<line x1="391.5" y1="466.0" x2="398.0" y2="466.5" stroke="#666" stroke-width="0.5" />
<line x1="398.0" y1="466.5" x2="407.6" y2="461.0" stroke="#666" stroke-width="0.5" />
<polygon points="447.0,333.0 454.8,336.0 464.7,530.0 449.0,519.5" fill="#f1f1f1" />
<line x1="447.0" y1="333.0" x2="449.0" y2="519.5" stroke="#666" stroke-width="0.5" />
<line x1="451.0" y1="331.5" x2="456.0" y2="523.0" stroke="#888" stroke-width="0.5" />
<polygon points="313.2,276.1 455.1,341.7 454.8,336.0 312.6,272.0" fill="#ececec" />
<polygon points="392.1,317.3 455.4,347.3 455.1,341.7 391.7,312.4" fill="#757575" />
<polygon points="342.8,294.0 367.9,305.8 367.3,301.1 342.3,289.5" fill="#cfcfcf" />
<polygon points="315.0,287.6 455.9,357.3 455.4,347.3 313.9,280.2" fill="#ededed" />
<line x1="313.9" y1="280.2" x2="455.4" y2="347.3" stroke="#6a6a6a" stroke-width="0.5" />
<line x1="313.2" y1="276.1" x2="455.1" y2="341.7" stroke="#6a6a6a" stroke-width="0.5" />
<line x1="312.6" y1="272.0" x2="454.8" y2="336.0" stroke="#6a6a6a" stroke-width="0.5" />
<line x1="314.4" y1="283.8" x2="455.6" y2="352.2" stroke="#aaa" stroke-width="0.4" />
<line x1="317.2" y1="290.2" x2="456.0" y2="359.5" stroke="#2a2a2a" stroke-width="1.3" />
<polygon points="325.6,357.5 460.6,450.3 460.1,439.8 324.4,349.5" fill="#f0f0f0" />
<polygon points="354.3,380.8 460.9,455.0 460.6,450.3 353.8,376.9" fill="#bdbdbd" />
<polygon points="354.7,383.9 461.1,458.8 460.9,455.0 354.3,380.8" fill="#757575" />
<line x1="324.4" y1="349.5" x2="460.1" y2="439.8" stroke="#333" stroke-width="0.9" />
<line x1="325.6" y1="357.5" x2="460.6" y2="450.3" stroke="#555" stroke-width="0.6" />
<line x1="324.9" y1="353.2" x2="460.3" y2="444.6" stroke="#999" stroke-width="0.4" />
<line x1="334.5" y1="370.1" x2="461.1" y2="458.8" stroke="#2a2a2a" stroke-width="1.2" />
<polygon points="411.0,484.4 437.0,506.5 433.7,461.9 406.9,441.7" fill="#7b7b7b" />
<line x1="411.0" y1="484.4" x2="406.9" y2="441.7" stroke="#333" stroke-width="0.8" />
<line x1="437.0" y1="506.5" x2="433.7" y2="461.9" stroke="#333" stroke-width="0.8" />
<line x1="406.9" y1="441.7" x2="433.7" y2="461.9" stroke="#333" stroke-width="0.8" />
<line x1="423.7" y1="495.2" x2="420.0" y2="451.5" stroke="#333" stroke-width="0.6" />
<line x1="407.7" y1="449.8" x2="434.3" y2="470.4" stroke="#444" stroke-width="0.6" />
<line x1="420.5" y1="479.4" x2="419.4" y2="466.5" stroke="#111" stroke-width="1.3" />
<line x1="424.6" y1="482.7" x2="423.5" y2="469.8" stroke="#111" stroke-width="1.3" />
<line x1="418.5" y1="471.8" x2="425.6" y2="477.5" stroke="#111" stroke-width="0.8" />
<polygon points="362.6,443.3 450.0,517.5 449.7,511.8 361.9,438.4" fill="#6a6a6a" />
<line x1="353.5" y1="435.6" x2="333.6" y2="292.8" stroke="#4a4a4a" stroke-width="2.2" />
<line x1="353.5" y1="435.6" x2="333.6" y2="292.8" stroke="#dedede" stroke-width="1.0" />
<line x1="333.6" y1="292.8" x2="332.0" y2="280.7" stroke="#555" stroke-width="0.7" />
<line x1="371.0" y1="450.5" x2="352.3" y2="301.8" stroke="#4a4a4a" stroke-width="2.2" />
<line x1="371.0" y1="450.5" x2="352.3" y2="301.8" stroke="#dedede" stroke-width="1.0" />
<line x1="352.3" y1="301.8" x2="350.7" y2="289.1" stroke="#555" stroke-width="0.7" />
<line x1="413.4" y1="486.4" x2="398.2" y2="324.0" stroke="#4a4a4a" stroke-width="2.2" />
<line x1="413.4" y1="486.4" x2="398.2" y2="324.0" stroke="#dedede" stroke-width="1.0" />
<line x1="398.2" y1="324.0" x2="396.9" y2="309.9" stroke="#555" stroke-width="0.7" />
<line x1="437.8" y1="507.2" x2="425.3" y2="337.1" stroke="#4a4a4a" stroke-width="2.2" />
<line x1="437.8" y1="507.2" x2="425.3" y2="337.1" stroke="#dedede" stroke-width="1.0" />
<line x1="425.3" y1="337.1" x2="424.2" y2="322.2" stroke="#555" stroke-width="0.7" />
<line x1="331.0" y1="254.6" x2="334.0" y2="283.0" stroke="#4a4a4a" stroke-width="2.5" />
<line x1="331.0" y1="254.6" x2="334.0" y2="283.0" stroke="#dedede" stroke-width="1.3" />
<line x1="346.8" y1="240.0" x2="352.6" y2="291.0" stroke="#4a4a4a" stroke-width="2.5" />
<line x1="346.8" y1="240.0" x2="352.6" y2="291.0" stroke="#dedede" stroke-width="1.3" />
<line x1="396.9" y1="309.9" x2="391.0" y2="258.0" stroke="#4a4a4a" stroke-width="2.2" />
<line x1="396.9" y1="309.9" x2="391.0" y2="258.0" stroke="#dedede" stroke-width="1.0" />
<line x1="424.2" y1="322.2" x2="420.5" y2="293.0" stroke="#4a4a4a" stroke-width="2.2" />
<line x1="424.2" y1="322.2" x2="420.5" y2="293.0" stroke="#dedede" stroke-width="1.0" />
<line x1="363.4" y1="223.6" x2="314.4" y2="270.5" stroke="#cfcfcf" stroke-width="1.6" />
<line x1="362.5" y1="223.0" x2="313.4" y2="270.0" stroke="#555" stroke-width="0.5" />
<line x1="335.1" y1="420.0" x2="312.6" y2="272.0" stroke="#444" stroke-width="0.6" />
<polygon points="464.7,530.0 640.5,412.0 648.6,266.8 454.9,338.0" fill="#848484" />
<polygon points="464.7,530.0 640.5,412.0 643.7,353.9 460.9,454.7" fill="#858585" />
<polygon points="460.1,439.5 471.5,433.5 467.1,333.5 454.9,338.0" fill="#f4f4f4" />
<polygon points="464.7,530.0 481.2,518.9 477.6,430.2 460.1,439.5" fill="#f6f6f6" />
<line x1="471.5" y1="433.5" x2="467.7" y2="348.2" stroke="#666" stroke-width="0.5" />
<line x1="481.2" y1="518.9" x2="478.2" y2="445.1" stroke="#666" stroke-width="0.5" />
<line x1="471.9" y1="525.2" x2="461.6" y2="350.6" stroke="#999" stroke-width="0.5" />
<polygon points="489.0,331.0 501.0,326.5 501.4,343.0 496.0,346.0 489.5,343.5" fill="#f1f1f1" stroke="#666" stroke-width="0.4" />
<polygon points="455.7,352.9 648.0,277.8 648.6,266.8 454.9,338.0" fill="#f2f2f2" />
<polygon points="467.9,352.0 499.5,339.4 499.4,335.8 467.7,348.2" fill="#6e6e6e" />
<polygon points="468.0,355.9 499.6,343.2 499.5,339.4 467.9,352.0" fill="#ececec" />
<line x1="456.1" y1="360.7" x2="647.6" y2="284.0" stroke="#2f2f2f" stroke-width="1.1" stroke-dasharray="1.7 0.8"/>
<line x1="455.7" y1="352.9" x2="648.0" y2="277.8" stroke="#555" stroke-width="0.5" />
<line x1="455.0" y1="339.1" x2="648.6" y2="267.6" stroke="#555" stroke-width="0.5" />
<line x1="573.9" y1="309.4" x2="586.4" y2="304.4" stroke="#222" stroke-width="1.2" stroke-dasharray="3 1.5"/>
<polygon points="460.1,439.5 644.4,342.4 644.6,338.7 459.8,434.7" fill="#f4f4f4" />
<polygon points="471.6,436.3 644.3,344.5 644.4,342.4 471.5,433.5" fill="#9a9a9a" />
<polygon points="460.8,453.7 643.8,353.2 644.3,344.5 460.2,442.4" fill="#ececec" />
<polygon points="478.4,448.8 643.6,356.7 643.8,353.2 478.2,444.2" fill="#747474" />
<line x1="459.8" y1="434.7" x2="644.6" y2="338.7" stroke="#555" stroke-width="0.5" />
<line x1="461.0" y1="458.4" x2="643.6" y2="356.7" stroke="#2e2e2e" stroke-width="0.9" />
<line x1="460.2" y1="442.4" x2="644.3" y2="344.5" stroke="#777" stroke-width="0.5" />
<line x1="460.8" y1="453.7" x2="643.8" y2="353.2" stroke="#666" stroke-width="0.5" />
<line x1="460.5" y1="448.1" x2="644.0" y2="348.9" stroke="#aaa" stroke-width="0.4" />
<polygon points="560.0,311.0 578.0,303.5 578.5,369.0 572.0,377.0 560.5,374.0" fill="#f3f3f3" />
<line x1="560.0" y1="311.0" x2="560.5" y2="374.0" stroke="#666" stroke-width="0.5" />
<line x1="578.0" y1="303.5" x2="578.5" y2="369.0" stroke="#666" stroke-width="0.4" />
<polygon points="554.4,398.0 579.7,384.0 579.7,445.0 566.0,461.5 554.4,454.0" fill="#f3f3f3" />
<polygon points="568.0,392.0 579.7,384.0 579.7,445.0 568.0,459.0" fill="#e6e6e6" />
<line x1="554.4" y1="398.0" x2="554.4" y2="454.0" stroke="#666" stroke-width="0.5" />
<line x1="554.4" y1="454.0" x2="566.0" y2="461.5" stroke="#666" stroke-width="0.5" />
<polygon points="637.4,288.0 648.0,283.5 646.5,338.0 637.0,341.5" fill="#eeeeee" />
<line x1="637.4" y1="288.0" x2="637.0" y2="341.5" stroke="#666" stroke-width="0.5" />
<line x1="642.0" y1="286.0" x2="641.5" y2="340.0" stroke="#999" stroke-width="0.5" stroke-dasharray="1 1"/>
<polygon points="628.5,362.0 642.5,355.0 641.7,409.0 636.0,412.0 628.0,408.5" fill="#f0f0f0" />
<line x1="628.5" y1="362.0" x2="628.0" y2="408.5" stroke="#666" stroke-width="0.5" />
<line x1="635.5" y1="359.0" x2="635.5" y2="411.0" stroke="#999" stroke-width="0.5" />
<polygon points="459.8,433.7 471.2,427.8 467.7,348.2 455.7,352.9" fill="#f4f4f4" />
<polygon points="464.7,530.0 481.2,518.9 478.4,448.8 461.0,458.4" fill="#f6f6f6" />
<line x1="471.2" y1="427.8" x2="467.7" y2="348.2" stroke="#666" stroke-width="0.5" />
<line x1="481.2" y1="518.9" x2="478.4" y2="448.8" stroke="#666" stroke-width="0.5" />
<line x1="471.9" y1="525.2" x2="461.6" y2="350.6" stroke="#999" stroke-width="0.5" />
<polygon points="594.5,442.9 618.1,427.0 619.9,386.6 595.7,400.9" fill="#828282" />
<line x1="594.5" y1="442.9" x2="595.7" y2="400.9" stroke="#333" stroke-width="0.7" />
<line x1="606.5" y1="434.8" x2="608.0" y2="393.6" stroke="#333" stroke-width="0.7" />
<line x1="618.1" y1="427.0" x2="619.9" y2="386.6" stroke="#333" stroke-width="0.7" />
<line x1="595.7" y1="400.9" x2="619.9" y2="386.6" stroke="#333" stroke-width="0.7" />
<polygon points="594.6,401.6 623.7,384.3 624.0,377.7 594.8,394.5" fill="#3b3a28" />
<line x1="595.5" y1="397.6" x2="623.2" y2="381.4" stroke="#8a8450" stroke-width="0.6" stroke-dasharray="1.5 1"/>
<line x1="605.0" y1="420.4" x2="605.4" y2="407.3" stroke="#111" stroke-width="1.1" />
<line x1="609.1" y1="417.8" x2="609.6" y2="404.7" stroke="#111" stroke-width="1.1" />
<line x1="604.0" y1="414.7" x2="610.6" y2="410.5" stroke="#111" stroke-width="0.7" />
<polygon points="481.2,518.9 640.5,412.0 640.7,408.2 481.0,514.2" fill="#6a6a6a" />
<line x1="503.8" y1="503.8" x2="499.1" y2="322.8" stroke="#3c3c3c" stroke-width="0.9" />
<line x1="538.2" y1="480.7" x2="537.4" y2="308.6" stroke="#3c3c3c" stroke-width="0.9" />
<line x1="567.7" y1="460.9" x2="569.9" y2="296.6" stroke="#3c3c3c" stroke-width="0.9" />
<line x1="594.9" y1="442.6" x2="599.5" y2="285.7" stroke="#3c3c3c" stroke-width="0.9" />
<line x1="619.5" y1="426.1" x2="626.1" y2="275.9" stroke="#3c3c3c" stroke-width="0.9" />
<line x1="453.0" y1="295.0" x2="464.7" y2="530.0" stroke="#555" stroke-width="0.8" />
<polygon points="307.9,241.0 358.0,172.0 466.0,306.0 454.8,336.0 363.4,223.6 312.6,272.0" fill="#6c6e6d" />
<polygon points="453.0,290.0 454.9,338.0 648.6,266.8 640.5,412.0 706.0,372.4 721.0,227.0 722.0,215.0" fill="#6c6e6d" />
<line x1="648.6" y1="266.8" x2="640.5" y2="412.0" stroke="#333" stroke-width="0.7" />
<line x1="648.6" y1="266.8" x2="718.7" y2="243.3" stroke="#333" stroke-width="0.6" />
<line x1="646.0" y1="339.6" x2="710.7" y2="306.4" stroke="#333" stroke-width="0.6" />
<line x1="721.0" y1="227.0" x2="706.0" y2="372.4" stroke="#444" stroke-width="0.6" />
<line x1="453.0" y1="295.0" x2="454.9" y2="338.0" stroke="#444" stroke-width="0.6" />
<line x1="464.7" y1="530.0" x2="706.0" y2="372.4" stroke="#e4e4e4" stroke-width="1.4" />
<line x1="465.5" y1="531.5" x2="707.0" y2="373.8" stroke="#666" stroke-width="0.5" />
<line x1="307.9" y1="241.0" x2="335.1" y2="420.0" stroke="#4a4ae8" stroke-width="0.9" stroke-dasharray="1.5 1"/>
<line x1="335.0" y1="420.0" x2="471.5" y2="538.0" stroke="#e03030" stroke-width="0.9" />
<polygon points="356.7,168.2 644.3,144.4 734.4,215.6 463.8,298.5" fill="#383838" />
<polygon points="463.8,298.5 734.4,215.6 734.4,220.8 464.5,304.6" fill="#2a2a2a" />
<polygon points="356.7,168.2 301.7,234.2 302.0,240.0 307.6,241.0 358.0,177.0" fill="#2c2c2c" />
<polygon points="356.7,168.2 463.8,298.5 464.5,304.6 463.3,303.8 357.6,172.5" fill="#2e2e2e" />
<line x1="356.7" y1="168.2" x2="463.8" y2="298.5" stroke="#222" stroke-width="0.6" />
<line x1="463.8" y1="298.5" x2="734.4" y2="215.6" stroke="#1c1c1c" stroke-width="0.6" />
</g>
</svg>
<svg width="1024" height="555" viewBox="0 0 1024 555" style="position:absolute;left:0;top:0;font-family:'Liberation Sans',sans-serif"><g transform="translate(9.6,8.6) scale(0.95)"><path d="M-4-3.5L1-5L4-3L4 3L-1 5L-4 3Z" fill="#e2202c"/><path d="M-2-1.5L1.5-2.5L1.5-.5L-1.5.5L-1.5 2L2 1" stroke="#fff" stroke-width="1.1" fill="none"/></g>
<text x="17.2" y="11.2" font-size="8.2" textLength="47.8" lengthAdjust="spacingAndGlyphs" fill="#444">Steel_buildingV8</text>
<text x="66.8" y="11.2" font-size="8.2" textLength="3" lengthAdjust="spacingAndGlyphs" fill="#444">-</text>
<g stroke="#444" stroke-width="0.8" fill="none"><path d="M73 5.2V7.8H77.6V5.2M73 6.5H77.6M72.3 9H78.3M75.3 7.8V9M73.2 10.2H77.5V12"/><path d="M81.5 5.2C81.5 8 80.5 9.5 79.3 10.8M81.5 7.5C82 9 82.8 10 83.8 10.8M85.3 4.8V12M85.3 8H86.6"/><path d="M86.9 5V7.6H90.7V5M86.9 6.3H90.7M86.2 8.6H91.4M88.8 7.6V8.6M87 9.6V11.7H91"/></g>
<text x="91.8" y="11.2" font-size="8.2" textLength="10.8" lengthAdjust="spacingAndGlyphs" fill="#444">.skp</text>
<text x="104.6" y="11.2" font-size="8.2" textLength="3" lengthAdjust="spacingAndGlyphs" fill="#444">-</text>
<text x="109.8" y="11.2" font-size="8.2" textLength="55.8" lengthAdjust="spacingAndGlyphs" fill="#444">SketchUp Pro 2020</text>
<path d="M960 8.3H965.6" stroke="#222" stroke-width="0.9"/><rect x="984.2" y="5.6" width="5" height="5" fill="none" stroke="#222" stroke-width="0.9"/><path d="M1008.2 5.4L1013.8 11M1013.8 5.4L1008.2 11" stroke="#222" stroke-width="0.9"/>
<text x="5.5" y="23.8" font-size="7.8" textLength="9.1" lengthAdjust="spacingAndGlyphs" fill="#303030">File</text>
<text x="22.5" y="23.8" font-size="7.8" textLength="10.3" lengthAdjust="spacingAndGlyphs" fill="#303030">Edit</text>
<text x="40.6" y="23.8" font-size="7.8" textLength="13.7" lengthAdjust="spacingAndGlyphs" fill="#303030">View</text>
<text x="62.1" y="23.8" font-size="7.8" textLength="21.9" lengthAdjust="spacingAndGlyphs" fill="#303030">Camera</text>
<text x="91.4" y="23.8" font-size="7.8" textLength="14.6" lengthAdjust="spacingAndGlyphs" fill="#303030">Draw</text>
<text x="113.9" y="23.8" font-size="7.8" textLength="14.6" lengthAdjust="spacingAndGlyphs" fill="#303030">Tools</text>
<text x="136.1" y="23.8" font-size="7.8" textLength="23.7" lengthAdjust="spacingAndGlyphs" fill="#303030">Window</text>
<text x="167" y="23.8" font-size="7.8" textLength="29.9" lengthAdjust="spacingAndGlyphs" fill="#303030">Extensions</text>
<text x="205" y="23.8" font-size="7.8" textLength="13" lengthAdjust="spacingAndGlyphs" fill="#303030">Help</text>
<line x1="4.5" y1="29" x2="4.5" y2="45" stroke="#c0c0c0" stroke-width="1" stroke-dasharray="1 1"/>
<g transform="translate(16.5,37.0) scale(0.9)"><path d="M-6-5L1-7L5-3L4 5L-3 7L-6 3Z" fill="#e2202c"/><path d="M-3-3L2-4M-3-1L2-2" stroke="#fff" stroke-width="1"/><circle cx="2.5" cy="3" r="4" fill="#fff" stroke="#111" stroke-width="1.1"/><path d="M0 3H5M2.5 .5V5.5" stroke="#111" stroke-width="1.2"/></g>
<g transform="translate(34.0,37.0) scale(0.9)"><path d="M-6-3L-2-5L3-4L3 0L-6 2Z" fill="#d8d8c8"/><path d="M-5-6L-1-6L-2-2Z" fill="#2e8b3a"/><circle cx="0" cy="-2" r="2" fill="#d03030"/><path d="M-7 0L4-2L7-4L4 5L-7 6Z" fill="#74725c"/><path d="M-7 0L4-2L7-4" stroke="#444" stroke-width=".6" fill="none"/></g>
<g transform="translate(52.0,37.0) scale(0.9)"><path d="M-6-6H5L6.5-4.5V6.5H-6Z" fill="#3573d6" stroke="#1c4aa0" stroke-width=".8"/><rect x="-4" y="-5.5" width="8" height="6" fill="#f4f4f4"/><rect x="-3.4" y="2" width="7" height="4.5" fill="#d8d8d8"/><rect x="-2.2" y="2.8" width="2.2" height="3.4" fill="#333"/></g>
<line x1="62.2" y1="29" x2="62.2" y2="45" stroke="#c6c6c6" stroke-width="1"/>
<g transform="translate(75.0,37.0) scale(0.9)"><path d="M4-6L-2 2M-5-2L3 1" stroke="#b4b4b4" stroke-width="1.3" fill="none"/><circle cx="-3" cy="3.5" r="2" fill="none" stroke="#b4b4b4" stroke-width="1.2"/><circle cx="-5.5" cy="-2.5" r="1.6" fill="none" stroke="#b4b4b4" stroke-width="1.1"/></g>
<g transform="translate(93.0,37.0) scale(1.1)"><path d="M-6-5L-1-6L1-3L0 1L-5 1Z" fill="#c4c4c4"/><path d="M-1-1L5 0L6 5L1 7L-2 4Z" fill="#b4b4b4"/><path d="M-4-3L-1-3M1 2L4 3" stroke="#eee" stroke-width="1"/></g>
<g transform="translate(110.8,37.0) scale(0.9)"><rect x="-3.6" y="-5" width="7.2" height="11.5" fill="none" stroke="#b0b0b0" stroke-width="1.4"/><rect x="-2" y="-6.5" width="4" height="2.5" fill="#b0b0b0"/><path d="M-1.5 3L0-1L1.5 3" stroke="#b8b8b8" stroke-width="1" fill="none"/></g>
<g transform="translate(128.9,37.0) scale(0.9)"><circle r="5.6" fill="none" stroke="#b0b0b0" stroke-width="1.2"/><path d="M-3.6-3.6L3.6 3.6M3.6-3.6L-3.6 3.6" stroke="#b0b0b0" stroke-width="1.2"/></g>
<line x1="139.3" y1="29" x2="139.3" y2="45" stroke="#c6c6c6" stroke-width="1"/>
<g transform="translate(151.7,37.0) scale(1.05)"><path d="M-6-2L-1-7V-4C4-4 6 0 4 4C2 7-2 6-3 5L-1 3C1 4 3 2 2 0C1-1 0-1-1-1V2Z" fill="#bcbcbc"/></g>
<g transform="translate(169.5,37.0) scale(1.05)"><path d="M6-2L1-7V-4C-4-4-6 0-4 4C-2 7 2 6 3 5L1 3C-1 4-3 2-2 0C-1-1 0-1 1-1V2Z" fill="#bcbcbc"/></g>
<line x1="180" y1="29" x2="180" y2="45" stroke="#c6c6c6" stroke-width="1"/>
<g transform="translate(191.7,37.0) scale(0.9)"><path d="M-2-6L5-5L3-1L-4-2Z" fill="#f4f4f4" stroke="#555" stroke-width=".5"/><path d="M-7-2L-3-4L7-1L4 3L-7 1Z" fill="#2a2a2a"/><path d="M-7 1L4 3L7-1V3L4 7L-7 5Z" fill="#444"/><path d="M-5 2L3 3.5L3 5.5L-5 4Z" fill="#eee"/></g>
<line x1="202.5" y1="29" x2="202.5" y2="45" stroke="#c6c6c6" stroke-width="1"/>
<g transform="translate(214.6,37.0) scale(0.9)"><path d="M-6-5L1-7L5-3L4 5L-3 7L-6 3Z" fill="#e2202c"/><path d="M-3-3L2-4M-3-1L2-2" stroke="#fff" stroke-width="1"/><circle cx="3" cy="3" r="4" fill="#1c4fa0"/><rect x="2.3" y="1.5" width="1.6" height="4" fill="#e8e8e8"/><circle cx="3.1" cy="0" r=".9" fill="#e8e8e8"/></g>
<line x1="224.7" y1="29" x2="224.7" y2="45" stroke="#c6c6c6" stroke-width="1"/>
<line x1="227.5" y1="29" x2="227.5" y2="45" stroke="#c0c0c0" stroke-width="1" stroke-dasharray="1 1"/>
<g transform="translate(239.1,37.3) scale(0.9)"><path d="M-6-1L-2-6L6-4L3 1Z" fill="#77755f" stroke="#333" stroke-width=".6"/><path d="M-6-1L-2 0L-2 6L-6 4Z" fill="#fff" stroke="#333" stroke-width=".6"/><path d="M-2 0L3 1L6-4L6 2L-2 6Z" fill="#eee" stroke="#333" stroke-width=".6"/><rect x="-4.7" y="1.5" width="1.5" height="3" fill="#333"/></g>
<g transform="translate(257.4,37.3) scale(0.9)"><path d="M-5-5L0-6L0 6L-5 5Z" fill="#8c8a74" stroke="#555" stroke-width=".6"/><path d="M0-6L5-5L5 5L0 6Z" fill="#a3a18b" stroke="#555" stroke-width=".6"/><rect x="1.5" y="-3.5" width="2" height="3" fill="#e8e8e8" stroke="#555" stroke-width=".4"/></g>
<g transform="translate(275.3,37.3) scale(0.9)"><path d="M-6.5 0L0-6L6.5 0" fill="none" stroke="#111" stroke-width="1.8"/><path d="M-4.5-.5V5.5H4.5V-.5" fill="#fff" stroke="#111" stroke-width="1.5"/><rect x="-1.3" y="1.5" width="2.6" height="4" fill="#111"/></g>
<g transform="translate(293.6,37.3) scale(0.9)"><path d="M-6.5-1L-5-4.5H5L6.5-1Z" fill="#77755f" stroke="#333" stroke-width=".6"/><rect x="-5.5" y="-1" width="11" height="6.5" fill="#fff" stroke="#222" stroke-width="1.2"/><rect x="1" y="-7" width="2.6" height="3.2" fill="#eee" stroke="#333" stroke-width=".6"/></g>
<g transform="translate(311.4,37.3) scale(0.9)"><path d="M-6.5 0L0-6L6.5 0" fill="none" stroke="#111" stroke-width="1.6"/><path d="M-4.5-.5V5.5H4.5V-.5" fill="#fff" stroke="#111" stroke-width="1.5"/></g>
<g transform="translate(329.7,37.3) scale(0.9)"><path d="M-6.5-1L-5-4.5H5L6.5-1Z" fill="#77755f" stroke="#333" stroke-width=".6"/><rect x="-5.5" y="-1" width="11" height="6.5" fill="#fff" stroke="#222" stroke-width="1.2"/></g>
<line x1="339.6" y1="29" x2="339.6" y2="45" stroke="#c6c6c6" stroke-width="1"/>
<line x1="342.6" y1="29" x2="342.6" y2="45" stroke="#c0c0c0" stroke-width="1" stroke-dasharray="1 1"/>
<g transform="translate(354.6,37.3) scale(0.9)"><rect x="-5.5" y="-6" width="11" height="12" fill="#5c7a3c"/><path d="M-5.5-6L-2-6L-3 0L-5.5 2Z" fill="#8a8f5a"/><path d="M-2 6L1-1L3 6Z" fill="#c8b060"/><path d="M1-5H5V-1H6L3 3L0-1H1Z" fill="#2a7ad8"/></g>
<g transform="translate(372.5,37.3) scale(0.9)"><path d="M-6-2L0-5L6 0L1 5L-5 2Z" fill="#d4d4d4"/><path d="M-6-2L0-5L6 0" fill="none" stroke="#c4c4c4" stroke-width=".7"/></g>
<line x1="382.8" y1="29" x2="382.8" y2="45" stroke="#c6c6c6" stroke-width="1"/>
<line x1="385.5" y1="29" x2="385.5" y2="45" stroke="#c0c0c0" stroke-width="1" stroke-dasharray="1 1"/>
<g transform="translate(397.1,37.3) scale(1.0)"><path d="M-6-2.7L1.3-6L6-.7L-2 2.7Z" fill="#8fb8dc" stroke="#2a4a70" stroke-width="0.8" stroke-linejoin="round"/><path d="M-6-2.7L-2 2.7L-1.3 6L-4.6 1.3Z" fill="#6f9cc8" stroke="#2a4a70" stroke-width="0.8" stroke-linejoin="round"/><path d="M-2 2.7L6-.7L4.6 3.3L-1.3 6Z" fill="#5f8cb8" stroke="#2a4a70" stroke-width="0.8" stroke-linejoin="round"/></g>
<g transform="translate(415.4,37.3) scale(1.0)"><path d="M-6-2.7L1.3-6L6-.7L-2 2.7Z" fill="#fff" stroke="#999" stroke-width="0.7" stroke-linejoin="round"/><path d="M-6-2.7L-2 2.7L-1.3 6L-4.6 1.3Z" fill="#fff" stroke="#999" stroke-width="0.7" stroke-linejoin="round"/><path d="M-2 2.7L6-.7L4.6 3.3L-1.3 6Z" fill="#fff" stroke="#999" stroke-width="0.7" stroke-linejoin="round"/></g>
<line x1="425.2" y1="29" x2="425.2" y2="45" stroke="#c6c6c6" stroke-width="1"/>
<g transform="translate(437.3,37.3) scale(1.0)"><path d="M-6-2.7L1.3-6L6-.7L-2 2.7ZM-6-2.7L-4.6 1.3L-1.3 6L-2 2.7M6-.7L4.6 3.3L-1.3 6M1.3-6L1.8-2.2L-4.6 1.3M1.8-2.2L4.6 3.3" fill="none" stroke="#333" stroke-width=".8" stroke-linejoin="round"/></g>
<g transform="translate(455.6,37.3) scale(1.0)"><path d="M-6-2.7L1.3-6L6-.7L-2 2.7Z" fill="#fff" stroke="#333" stroke-width="0.9" stroke-linejoin="round"/><path d="M-6-2.7L-2 2.7L-1.3 6L-4.6 1.3Z" fill="#fff" stroke="#333" stroke-width="0.9" stroke-linejoin="round"/><path d="M-2 2.7L6-.7L4.6 3.3L-1.3 6Z" fill="#fff" stroke="#333" stroke-width="0.9" stroke-linejoin="round"/></g>
<g transform="translate(473.9,37.3) scale(1.0)"><path d="M-6-2.7L1.3-6L6-.7L-2 2.7Z" fill="#a5a390" stroke="#555" stroke-width="0.5" stroke-linejoin="round"/><path d="M-6-2.7L-2 2.7L-1.3 6L-4.6 1.3Z" fill="#8a8873" stroke="#555" stroke-width="0.5" stroke-linejoin="round"/><path d="M-2 2.7L6-.7L4.6 3.3L-1.3 6Z" fill="#6f6d5a" stroke="#555" stroke-width="0.5" stroke-linejoin="round"/></g>
<rect x="483" y="28.2" width="19.1" height="18.2" fill="#cce4f7"/>
<g transform="translate(492.6,37.3) scale(1.0)"><path d="M-6-2.7L1.3-6L6-.7L-2 2.7Z" fill="#2a2a2a"/><path d="M-6-2.7L-2 2.7L-1.3 6L-4.6 1.3Z" fill="#1a1a1a"/><path d="M-2 2.7L6-.7L4.6 3.3L-1.3 6Z" fill="#555"/><path d="M-4.2-.6L3.6-4.2M-2.6 1.6L5.2-2" stroke="#bdbdbd" stroke-width="1.2"/><path d="M-1.8 4L5.3 .9" stroke="#999" stroke-width=".9"/></g>
<g transform="translate(510.4,37.3) scale(1.0)"><path d="M-6-2.7L1.3-6L6-.7L-2 2.7Z" fill="#2f86d8"/><path d="M-6-2.7L-2 2.7L-1.3 6L-4.6 1.3Z" fill="#1f66b0"/><path d="M-2 2.7L6-.7L4.6 3.3L-1.3 6Z" fill="#2a78c8"/><path d="M-4.5-.8L2 0L4.8 2.6L-1.6 5.4Z" fill="#a8a698"/></g>
<line x1="521.2" y1="29" x2="521.2" y2="45" stroke="#c6c6c6" stroke-width="1"/>
<line x1="524" y1="29" x2="524" y2="45" stroke="#c0c0c0" stroke-width="1" stroke-dasharray="1 1"/>
<g transform="translate(535.0,37.3) scale(0.9)"><rect x="-7.5" y="-7.5" width="15" height="15" fill="#2b6a90"/><path d="M-3.5-6L0 1L0 7M4.5-6.5L0 1M1 4C3 1 5 2 6.5 1C5.5 4 3 5 1 4Z" stroke="#fff" stroke-width="1.6" fill="#fff" stroke-linecap="round"/></g>
<line x1="545.4" y1="29" x2="545.4" y2="45" stroke="#c6c6c6" stroke-width="1"/>
<g transform="translate(557.9,37.3) scale(0.9)"><path d="M-3.3-3.8L3.6 0L-3.3 3.8Z" fill="#111"/></g>
<g transform="translate(575.7,37.3) scale(0.9)"><rect x="-4.2" y="-4.2" width="8.4" height="8.4" fill="#808080"/></g>
<line x1="585.7" y1="29" x2="585.7" y2="45" stroke="#c6c6c6" stroke-width="1"/>
<g transform="translate(598.0,37.3) scale(0.9)"><rect x="-7" y="-5" width="6" height="4" fill="#a8a8a8"/><path d="M-1-4L2-5.5V-.5L-1-2Z" fill="#a8a8a8"/><path d="M-4-1V3H1" stroke="#a0a0a0" stroke-width="1" fill="none"/><rect x="2" y="1" width="5" height="4" fill="none" stroke="#b0b0b0" stroke-width=".9"/></g>
<g transform="translate(616.5,37.3) scale(0.9)"><rect x="-4.5" y="-5" width="6" height="4" fill="#a8a8a8"/><path d="M1.5-4L4.5-5.5V-.5L1.5-2Z" fill="#a8a8a8"/><path d="M-2 2L1 5M1 2L-2 5" stroke="#a0a0a0" stroke-width="1"/></g>
<line x1="626.7" y1="29" x2="626.7" y2="45" stroke="#c6c6c6" stroke-width="1"/>
<g transform="translate(638.7,37.3) scale(0.9)"><rect x="-1.3" y="-5.8" width="2.6" height="3" fill="#111" transform="rotate(0)"/><rect x="-1.3" y="-5.8" width="2.6" height="3" fill="#111" transform="rotate(45)"/><rect x="-1.3" y="-5.8" width="2.6" height="3" fill="#111" transform="rotate(90)"/><rect x="-1.3" y="-5.8" width="2.6" height="3" fill="#111" transform="rotate(135)"/><rect x="-1.3" y="-5.8" width="2.6" height="3" fill="#111" transform="rotate(180)"/><rect x="-1.3" y="-5.8" width="2.6" height="3" fill="#111" transform="rotate(225)"/><rect x="-1.3" y="-5.8" width="2.6" height="3" fill="#111" transform="rotate(270)"/><rect x="-1.3" y="-5.8" width="2.6" height="3" fill="#111" transform="rotate(315)"/><circle r="4.2" fill="#111"/><circle r="1.8" fill="#f0f0f0"/></g>
<line x1="648.8" y1="29" x2="648.8" y2="45" stroke="#c6c6c6" stroke-width="1"/>
<line x1="651.5" y1="29" x2="651.5" y2="45" stroke="#c0c0c0" stroke-width="1" stroke-dasharray="1 1"/>
<g transform="translate(663.3,37.3) scale(0.9)"><path d="M0-7V7" stroke="#222" stroke-width="1.6"/><path d="M-1-4C-6-4-7 0-5 3L-7 3L-3 7L-1 2L-3 2.5C-4 1-3-1-1-1Z" fill="#d8202c" stroke="#8a1018" stroke-width=".4"/><path d="M1 4C6 4 7 0 5-3L7-3L3-7L1-2L3-2.5C4-1 3 1 1 1Z" fill="#38a848" stroke="#1c6a28" stroke-width=".4"/></g>
<g transform="translate(681.6,37.3) scale(0.9)"><path d="M-6 1C-4-3-1-6 2-6.5C4-6.5 4-5 3-4.5C5-5 6.5-4.5 5.5-3C6.5-2.5 6.5-1 5-0.5C5.5 1 4 2 2 1.5C3 3 2 5 0 5.5C-2 6.5-5 5-6 1Z" fill="#ead6a6" stroke="#b09a68" stroke-width=".6"/></g>
<rect x="690.3" y="28.2" width="18.3" height="18.2" fill="#cce4f7"/>
<g transform="translate(700.3,37.0) scale(0.9)"><path d="M-.5 1.5L-6 7" stroke="#111" stroke-width="2" stroke-linecap="round"/><circle cx="2" cy="-1.5" r="3.6" fill="#9cc4ea" stroke="#2a3a50" stroke-width="1.1"/><circle cx="1" cy="-2.5" r="1.2" fill="#d4e8fa"/></g>
<g transform="translate(718.0,37.5) scale(0.9)"><rect x="-5.8" y="-4.8" width="11.5" height="10.8" fill="none" stroke="#e82830" stroke-width="1.1"/><path d="M-.5 1.5L-5.5 6.5" stroke="#111" stroke-width="1.9" stroke-linecap="round"/><circle cx="2" cy="-1.8" r="3.5" fill="#9cc4ea" stroke="#2a3a50" stroke-width="1"/></g>
<g transform="translate(736.5,37.0) scale(0.9)"><path d="M-6.5-6.5L-2-5L-5-2ZM6.5-6.5L2-5L5-2ZM-6.5 6.5L-2 5L-5 2ZM6.5 6.5L2 5L5 2Z" fill="#e0202c"/><path d="M-5-5L5 5M5-5L-5 5" stroke="#555" stroke-width="1"/><circle r="2.8" fill="#9cc4ea" stroke="#3a5a80" stroke-width=".8"/></g>
<g transform="translate(753.9,36.8) scale(0.9)"><path d="M1.5 2L6 6.5" stroke="#111" stroke-width="2" stroke-linecap="round"/><circle cx="-1.5" cy="-2" r="3.6" fill="#9cc4ea" stroke="#2a5a90" stroke-width="1"/><path d="M-6.5-1L-2.5-5V-3C2-3.5 4-1 4 2C2.5 0 0 0-2.5.5V2.5Z" fill="#2a7ad8" stroke="#174a90" stroke-width=".4"/></g>
<g transform="translate(771.4,37.3) scale(0.9)"><circle cx="0" cy="-5.3" r="1.3" fill="#fff" stroke="#444" stroke-width=".6"/><path d="M-1.4-3.5H1.4L2 1L1 5H-1L-2 1Z" fill="#fff" stroke="#444" stroke-width=".6"/><path d="M-2.5 4L2.5 7M2.5 4L-2.5 7" stroke="#e0202c" stroke-width=".9"/></g>
<g transform="translate(789.6,36.8) scale(0.9)"><path d="M-7 0C-4-4 3-5 7-1C4 3-3 4-7 0Z" fill="#fff" stroke="#111" stroke-width=".9"/><circle cx="0" cy="-.5" r="2.6" fill="#333"/><circle cx=".6" cy="-1.2" r=".8" fill="#ddd"/><path d="M-7-2C-4-6 3-6.5 7-3" stroke="#111" stroke-width="1.3" fill="none"/><path d="M-5 3C-2 5 2 5 5 2.5" stroke="#888" stroke-width=".6" fill="none"/></g>
<g transform="translate(807.9,37.3) scale(0.9)"><ellipse cx="-3" cy="-.5" rx="2.2" ry="3.4" fill="#111" transform="rotate(12 -3 -.5)"/><ellipse cx="-3.8" cy="5" rx="1.7" ry="1.6" fill="#111"/><ellipse cx="3.3" cy="-3" rx="2.2" ry="3.4" fill="#111" transform="rotate(12 3.3 -3)"/><ellipse cx="2.4" cy="2.6" rx="1.7" ry="1.6" fill="#111"/></g>
<line x1="818.5" y1="27" x2="818.5" y2="47" stroke="#e0e0e0" stroke-width="1"/>
<line x1="944.5" y1="29" x2="944.5" y2="45" stroke="#c0c0c0" stroke-width="1" stroke-dasharray="1 1"/>
<g transform="translate(956.0,37.0) scale(0.9)"><path d="M-5-1L0-5.5L5-2L3 2L-4 3Z" fill="#2a2a2a"/><path d="M0-5.5L2-6L5-2Z" fill="#e08030"/><path d="M-4 0L-1-1L-1 2L-4 3Z" fill="#f0f0f0"/><path d="M-4 4C-1 6.5 3 6 5 3.5" stroke="#48c048" stroke-width="1.6" fill="none"/></g>
<line x1="966.3" y1="27" x2="966.3" y2="46" stroke="#c6c6c6" stroke-width="1"/>
<line x1="4" y1="90.3" x2="38" y2="90.3" stroke="#cfcfcf" stroke-width="1"/>
<line x1="4" y1="185.2" x2="38" y2="185.2" stroke="#cfcfcf" stroke-width="1"/>
<line x1="4" y1="244" x2="38" y2="244" stroke="#cfcfcf" stroke-width="1"/>
<line x1="4" y1="303" x2="38" y2="303" stroke="#cfcfcf" stroke-width="1"/>
<line x1="4" y1="361.4" x2="38" y2="361.4" stroke="#cfcfcf" stroke-width="1"/>
<line x1="4" y1="401.8" x2="38" y2="401.8" stroke="#cfcfcf" stroke-width="1"/>
<line x1="4" y1="442" x2="38" y2="442" stroke="#cfcfcf" stroke-width="1"/>
<rect x="3" y="323.6" width="17.8" height="17.9" fill="#cce4f7"/>
<g transform="translate(10.9,62.7) scale(0.78)"><path d="M-2.5-6.5L-2.5 4L0 1.5L2 6L3.5 5.2L1.6 1L5 1Z" fill="#111"/></g>
<g transform="translate(29.8,62.4) scale(0.95)"><path d="M-5-3L0-6L6-3.5L5 3L-1 6L-5 3Z" fill="#dcdcdc" stroke="#a8a8a8" stroke-width="1.1"/><path d="M-5-3L0-.5L6-3.5M0-.5L-1 6" stroke="#a8a8a8" stroke-width="1" fill="none"/><rect x="-1.2" y="-2.8" width="3.6" height="3.6" fill="#e8e8e8" stroke="#b0b0b0" stroke-width=".8"/><path d="M1 1L4 3" stroke="#b0b0b0" stroke-width=".8"/></g>
<g transform="translate(11.8,81.0) scale(0.92)"><path d="M-3-5C1-8 6-5 6-1C6 4 1 6-2 4Z" fill="#4a4c52" stroke="#222" stroke-width=".7"/><ellipse cx="1.6" cy=".6" rx="2.8" ry="2.3" fill="#e0d0a0" stroke="#333" stroke-width=".5"/><path d="M-2.4-5.4C1-7.6 4.6-6.2 5.6-3.4" stroke="#8ab0d8" stroke-width="1.2" fill="none"/><path d="M-3-4.5C-7-2.5-8 2-6 6.5C-4 3.5-3 0-1-2Z" fill="#f4b810" stroke="#705800" stroke-width=".6"/></g>
<g transform="translate(29.8,80.8) scale(0.95)"><path d="M-6.5-.5L2.5-7L6.5-5L-2.5 1.5Z" fill="#f8b4c6" stroke="#b05070" stroke-width=".5"/><path d="M-6.5-.5L-2.5 1.5L-2.5 6L-6.5 4Z" fill="#e8708e" stroke="#b05070" stroke-width=".5"/><path d="M-2.5 1.5L6.5-5V-.8L-2.5 6Z" fill="#f08ca6" stroke="#b05070" stroke-width=".5"/></g>
<g transform="translate(11.5,103.0) scale(0.9)"><path d="M-6.5 6.5L-5.5 3L3.5-6L6-3.5L-3 5.5Z" fill="#d8202c" stroke="#70101a" stroke-width=".6"/><path d="M-6.5 6.5L-5.5 3L-3 5.5Z" fill="#e8c890"/><path d="M3.5-6L6-3.5L7-4.5L4.5-7Z" fill="#555"/></g>
<g transform="translate(29.8,103.0) scale(0.9)"><path d="M-6 6C-8 0-3-1-1 1C2 4 5 3 3-1C1-5 0-7 5-7" fill="none" stroke="#d8202c" stroke-width="1.3"/><circle cx="5" cy="-7" r="1" fill="#d8202c"/><circle cx="-6" cy="6" r="1" fill="#d8202c"/></g>
<g transform="translate(11.5,121.0) scale(0.9)"><rect x="-5" y="-5.5" width="10.5" height="11" fill="#8c8a74" stroke="#55533f" stroke-width=".7"/><path d="M-5 5.5L5.5-5.5" stroke="#f04050" stroke-width="1"/><circle cx="-5" cy="5.5" r="1.1" fill="#f03040"/><circle cx="5.5" cy="-5.5" r="1.1" fill="#f03040"/></g>
<g transform="translate(29.8,121.0) scale(0.9)"><rect x="-4.5" y="-5.5" width="10" height="11" fill="#8c8a74" stroke="#55533f" stroke-width=".7"/><path d="M-4.5-5.5V5.5H5.5" stroke="#f04050" stroke-width="1" fill="none" stroke-dasharray="1.5 1"/><path d="M-4.5-2C0-2 3 1 3 5.5" stroke="#f04050" stroke-width=".9" fill="none"/><circle cx="-4.5" cy="-5.5" r="1.1" fill="#f03040"/><circle cx="-4.5" cy="5.5" r="1.1" fill="#f03040"/><circle cx="5.5" cy="5.5" r="1.1" fill="#f03040"/></g>
<g transform="translate(11.5,138.5) scale(0.9)"><circle r="6" fill="#8c8a74" stroke="#55533f" stroke-width=".8"/><path d="M0 0L4.2-4.2" stroke="#f04050" stroke-width="1"/><circle r="1" fill="#f03040"/><circle cx="4.2" cy="-4.2" r="1" fill="#f03040"/></g>
<g transform="translate(29.8,138.5) scale(0.9)"><circle r="6.3" fill="none" stroke="#f04050" stroke-width=".8"/><path d="M-3-5.2L3-5.2L6 0L3 5.2L-3 5.2L-6 0Z" fill="#8c8a74" stroke="#55533f" stroke-width=".7"/><path d="M0 0L4-4" stroke="#f04050" stroke-width="1"/><circle r="1" fill="#f03040"/></g>
<g transform="translate(11.9,157.0) scale(1.0)"><path d="M5.1-5.1Q5.5 3.2-5.1 5.1" stroke="#333" stroke-width="1" fill="none"/><path d="M-5.1-5.1H5.1L-5.1 5.1" stroke="#f05060" stroke-width=".9" fill="none"/><circle cx="-5.1" cy="-5.1" r="1.1" fill="#f02838"/><circle cx="5.1" cy="-5.1" r="1.1" fill="#f02838"/><circle cx="-5.1" cy="5.1" r="1.1" fill="#f02838"/></g>
<g transform="translate(30.8,157.3) scale(1.0)"><path d="M-3.8 4.8C-7.5 1-7-3.5-4.5-4.5C-1-7 3-6.5 4.8-4.5" stroke="#333" stroke-width="1" fill="none"/><path d="M4.8-4.5L-3.8 4.8M-4.5-4.5L-.6-.2" stroke="#f05060" stroke-width=".9" fill="none"/><circle cx="-4.5" cy="-4.5" r="1.1" fill="#f02838"/><circle cx="4.8" cy="-4.5" r="1.1" fill="#f02838"/><circle cx="-3.8" cy="4.8" r="1.1" fill="#f02838"/></g>
<g transform="translate(12.3,175.1) scale(1.0)"><path d="M-1.7-4.8C4-6 8 0 3.8 4.5C1 6.5-3.5 5.5-5.5 2" stroke="#333" stroke-width="1" fill="none"/><path d="M-1.7-4.8L3.8 4.5L-5.5 2" stroke="#f05060" stroke-width=".9" fill="none"/><circle cx="-1.7" cy="-4.8" r="1.1" fill="#f02838"/><circle cx="-5.5" cy="2" r="1.1" fill="#f02838"/><circle cx="3.8" cy="4.5" r="1.1" fill="#f02838"/></g>
<g transform="translate(29.7,175.1) scale(1.0)"><path d="M-5.1-4.8H5.1A10 10 0 0 1-5.1 4.8Z" fill="#8c8a74" stroke="#4a4838" stroke-width=".7"/><path d="M-5.1 4.8V-4.8H5.1L-5.1 4.8" stroke="#f05060" stroke-width=".8" fill="none"/><circle cx="-5.1" cy="-4.8" r="1.1" fill="#f02838"/><circle cx="5.1" cy="-4.8" r="1.1" fill="#f02838"/><circle cx="-5.1" cy="4.8" r="1.1" fill="#f02838"/></g>
<g transform="translate(11.5,197.5) scale(0.8)"><path d="M0-7.5L3-4H1V-1H4V-3L7.5 0L4 3V1H1V4H3L0 7.5L-3 4H-1V1H-4V3L-7.5 0L-4-3V-1H-1V-4H-3Z" fill="#e0202c" stroke="#80101a" stroke-width=".4"/></g>
<g transform="translate(29.8,197.5) scale(0.9)"><path d="M-7 2L0-1L7 2L0 5.5Z" fill="#8c8a74" stroke="#444" stroke-width=".6"/><path d="M-7 2V4L0 7.5V5.5ZM7 2V4L0 7.5V5.5Z" fill="#5e5c4a" stroke="#333" stroke-width=".5"/><path d="M0-7.5L3-3.5H1V2H-1V-3.5H-3Z" fill="#e0202c" stroke="#80101a" stroke-width=".4"/></g>
<g transform="translate(11.5,215.7) scale(0.9)"><path d="M-6 0C-6-5 0-7 4-4L5.5-6L6.5-.5L1-1.5L2.5-3C0-4.5-3-3-3.5 0Z" fill="#e0202c"/><path d="M6 1C6 6 0 8-4 5L-5.5 7L-6.5 1.5L-1 2.5L-2.5 4C0 5.5 3 4 3.5 1Z" fill="#e0202c"/></g>
<g transform="translate(29.8,215.7) scale(0.9)"><path d="M-6 5C-8-2-2-7 4-5C7-4 7-1 6 1L2-1C2-2.5-1-3-2 0C-3 2-2 4-2 6Z" fill="#3a3a34" stroke="#111" stroke-width=".5"/><path d="M-2 6C-3 1 1-2 4 0L5-2L7 4L1 4L2.5 2C1 1-0.5 2 0 5Z" fill="#e0202c"/></g>
<g transform="translate(11.5,233.6) scale(0.9)"><rect x="-6.5" y="-6" width="12.5" height="12.5" fill="none" stroke="#f04050" stroke-width=".9"/><rect x="-6.5" y="-1.5" width="8" height="8" fill="#8c8a74" stroke="#55533f" stroke-width=".6"/><path d="M-1 1L3-3L1.5-4.5L7-6.5L5 -1L3.8-2.3L0 2Z" fill="#e0202c" stroke="#80101a" stroke-width=".4"/></g>
<g transform="translate(29.8,233.6) scale(0.9)"><path d="M-6 3C-6-4 0-7 6-4" stroke="#f04050" stroke-width="1" fill="none"/><path d="M-2 7C-3 2 1-1 5 1" stroke="#f04050" stroke-width="1" fill="none"/><path d="M-3 6L0 0L-1.5-.5L3-3.5L3.5 2L2 1.2L-1 7Z" fill="#e0202c" stroke="#80101a" stroke-width=".3"/><path d="M5 1C7 3 6 6 4 7" stroke="#222" stroke-width=".8" fill="none"/></g>
<g transform="translate(11.8,256.8) scale(1.0)"><path d="M-4.6 4.6L-.5 .8" stroke="#111" stroke-width="2.6" stroke-linecap="round"/><path d="M-4.3 4.3L-.8 1.1" stroke="#e8d818" stroke-width="1.1" stroke-dasharray="1.2 .8"/><ellipse cx="2.3" cy="-2.2" rx="3.4" ry="4.6" transform="rotate(28 2.3 -2.2)" fill="#2a2a18" stroke="#111" stroke-width=".5"/><ellipse cx="2.3" cy="-2.2" rx="1.7" ry="3" transform="rotate(28 2.3 -2.2)" fill="#f0e010"/></g>
<g transform="translate(28.1,258.9) scale(1.0)"><path d="M-2.2-1.2L3-6.2M-2.2-1.2L2 3M3-6.2L7-2.2" stroke="#777" stroke-width=".7" fill="none"/><path d="M2-7L4-5.2M4-7L2-5.2M-3.2-2L-1.2-.2M-1.2-2L-3.2-.2" stroke="#222" stroke-width=".8"/><text x="-3.2" y="-4" font-size="4.6" font-family="Liberation Sans" fill="#333">3</text><circle cx="7" cy="-2.2" r=".9" fill="#40c050"/><circle cx="2" cy="3" r=".9" fill="#40c050"/></g>
<g transform="translate(12.5,274.3) scale(1.0)"><path d="M5.5-4.5L-2.5 5C-6 4.5-7.5 1-6 -1.5C-3.5-4.5 1-5.5 5.5-4.5Z" fill="#c0b020" stroke="#4a4208" stroke-width="1.2" stroke-linejoin="round"/><path d="M2.2-2.6L-2.3 2.7C-4 2.2-4.3 .5-3.5-.6C-2.2-2.2 0-2.9 2.2-2.6Z" fill="#f4f4f4" stroke="#4a4208" stroke-width=".5"/></g>
<g transform="translate(30.8,275.3) scale(1.0)"><rect x="-2.8" y="-6" width="8.4" height="6.6" fill="#fff" stroke="#777" stroke-width=".7"/><text x="-1.6" y="-.9" font-size="5.2" font-family="Liberation Sans" fill="#333">A1</text><path d="M-3-2.8L-4.4 3" stroke="#777" stroke-width=".7" stroke-dasharray=".8 .6"/><circle cx="-4.4" cy="3.6" r="1" fill="#111"/></g>
<g transform="translate(11.5,292.0) scale(0.9)"><path d="M0 1V-7" stroke="#2050e0" stroke-width="1.2"/><path d="M0 1L6 4" stroke="#30b040" stroke-width="1.2"/><path d="M0 1L-6 4" stroke="#e02030" stroke-width="1.2"/><path d="M0 1L5-3" stroke="#30b040" stroke-width=".6" stroke-dasharray="1 1"/><path d="M0 1L-5-3" stroke="#e02030" stroke-width=".6" stroke-dasharray="1 1"/><path d="M0-8L1.3-5.5H-1.3Z" fill="#2050e0"/><circle cx="6" cy="4" r="1" fill="#30b040"/><circle cx="-6" cy="4" r="1" fill="#e02030"/></g>
<g transform="translate(29.8,292.0) scale(0.9)"><path d="M-6 6L-2-7H2L7 5L4 7L2.5 3H-1.5L-2.5 7Z" fill="#5e5c4a" stroke="#2a2a20" stroke-width=".6"/><path d="M-6 6L-2-7L-.5-5L-4 6.5Z" fill="#3a3a30"/></g>
<g transform="translate(11.5,315.3) scale(0.9)"><path d="M0-7V7" stroke="#222" stroke-width="1.6"/><path d="M-1-4C-6-4-7 0-5 3L-7 3L-3 7L-1 2L-3 2.5C-4 1-3-1-1-1Z" fill="#d8202c" stroke="#8a1018" stroke-width=".4"/><path d="M1 4C6 4 7 0 5-3L7-3L3-7L1-2L3-2.5C4-1 3 1 1 1Z" fill="#38a848" stroke="#1c6a28" stroke-width=".4"/></g>
<g transform="translate(29.8,315.3) scale(0.9)"><path d="M-6 1C-4-3-1-6 2-6.5C4-6.5 4-5 3-4.5C5-5 6.5-4.5 5.5-3C6.5-2.5 6.5-1 5-0.5C5.5 1 4 2 2 1.5C3 3 2 5 0 5.5C-2 6.5-5 5-6 1Z" fill="#ead6a6" stroke="#b09a68" stroke-width=".6"/></g>
<g transform="translate(11.5,332.4) scale(0.9)"><path d="M-.5 1.5L-6 7" stroke="#111" stroke-width="2" stroke-linecap="round"/><circle cx="2" cy="-1.5" r="3.6" fill="#9cc4ea" stroke="#2a3a50" stroke-width="1.1"/><circle cx="1" cy="-2.5" r="1.2" fill="#d4e8fa"/></g>
<g transform="translate(29.8,332.4) scale(0.9)"><rect x="-5.8" y="-4.8" width="11.5" height="10.8" fill="none" stroke="#e82830" stroke-width="1.1"/><path d="M-.5 1.5L-5.5 6.5" stroke="#111" stroke-width="1.9" stroke-linecap="round"/><circle cx="2" cy="-1.8" r="3.5" fill="#9cc4ea" stroke="#2a3a50" stroke-width="1"/></g>
<g transform="translate(11.5,350.5) scale(0.9)"><path d="M-6.5-6.5L-2-5L-5-2ZM6.5-6.5L2-5L5-2ZM-6.5 6.5L-2 5L-5 2ZM6.5 6.5L2 5L5 2Z" fill="#e0202c"/><path d="M-5-5L5 5M5-5L-5 5" stroke="#555" stroke-width="1"/><circle r="2.8" fill="#9cc4ea" stroke="#3a5a80" stroke-width=".8"/></g>
<g transform="translate(29.8,350.5) scale(0.9)"><path d="M1.5 2L6 6.5" stroke="#111" stroke-width="2" stroke-linecap="round"/><circle cx="-1.5" cy="-2" r="3.6" fill="#9cc4ea" stroke="#2a5a90" stroke-width="1"/><path d="M-6.5-1L-2.5-5V-3C2-3.5 4-1 4 2C2.5 0 0 0-2.5.5V2.5Z" fill="#2a7ad8" stroke="#174a90" stroke-width=".4"/></g>
<g transform="translate(11.5,372.7) scale(0.9)"><circle cx="0" cy="-5.3" r="1.3" fill="#fff" stroke="#444" stroke-width=".6"/><path d="M-1.4-3.5H1.4L2 1L1 5H-1L-2 1Z" fill="#fff" stroke="#444" stroke-width=".6"/><path d="M-2.5 4L2.5 7M2.5 4L-2.5 7" stroke="#e0202c" stroke-width=".9"/></g>
<g transform="translate(29.8,372.7) scale(0.9)"><path d="M-7 0C-4-4 3-5 7-1C4 3-3 4-7 0Z" fill="#fff" stroke="#111" stroke-width=".9"/><circle cx="0" cy="-.5" r="2.6" fill="#333"/><circle cx=".6" cy="-1.2" r=".8" fill="#ddd"/><path d="M-7-2C-4-6 3-6.5 7-3" stroke="#111" stroke-width="1.3" fill="none"/><path d="M-5 3C-2 5 2 5 5 2.5" stroke="#888" stroke-width=".6" fill="none"/></g>
<g transform="translate(11.5,391.1) scale(0.9)"><ellipse cx="-3" cy="-.5" rx="2.2" ry="3.4" fill="#111" transform="rotate(12 -3 -.5)"/><ellipse cx="-3.8" cy="5" rx="1.7" ry="1.6" fill="#111"/><ellipse cx="3.3" cy="-3" rx="2.2" ry="3.4" fill="#111" transform="rotate(12 3.3 -3)"/><ellipse cx="2.4" cy="2.6" rx="1.7" ry="1.6" fill="#111"/></g>
<g transform="translate(29.8,391.1) scale(0.9)"><circle r="4" fill="none" stroke="#222" stroke-width=".9"/><path d="M-7 0H7M0-7V7" stroke="#222" stroke-width=".8"/><path d="M7 0L4.5-2V2Z" fill="#111"/></g>
<g transform="translate(11.5,413.7) scale(1.0)"><ellipse cx="0" cy=".8" rx="6.2" ry="5" fill="#3c3c3c" transform="rotate(-12)"/><ellipse cx="0" cy="0" rx="4.3" ry="4.5" fill="#dc2430" transform="rotate(-12)"/><path d="M-1.8-1.6L1.6-2.6L1.6-.6L-1.4.4L-1.4 2L2 1" stroke="#f8d0d0" stroke-width=".9" fill="none"/></g>
<g transform="translate(29.8,413.7) scale(1.0)"><ellipse cx="-.6" cy=".2" rx="6.3" ry="4.2" fill="#444" transform="rotate(12)"/><ellipse cx="-.4" cy="-1.2" rx="5.2" ry="3" fill="#d81826" transform="rotate(12)"/><path d="M-3-1.8C-1-2.8 2-2.4 3.4-1" stroke="#f0a0a0" stroke-width=".7" fill="none"/><circle cx="3.8" cy="2.8" r="3.1" fill="#f0c018" stroke="#806000" stroke-width=".5"/><path d="M2.2 2.4H3.4M4.2 2.4H5.4" stroke="#222" stroke-width="1"/></g>
<g transform="translate(11.5,432.3) scale(1.0)"><rect x="-6.5" y="-5.5" width="9.5" height="10.5" rx="1" fill="#f0505c" transform="rotate(-6)"/><path d="M-4.5-3.2H1M-4.5-1H1M-4.5 1.2H-1.5" stroke="#fbe0e0" stroke-width="1.2" transform="rotate(-6)"/><path d="M-1.5 2.2H2.6V.6L6.6 3.6L2.6 6.6V5H-1.5Z" fill="#1c78e0" stroke="#0c4aa0" stroke-width=".4"/></g>
<g transform="translate(29.8,432.3) scale(1.0)"><path d="M-6.8-2.2L-3-5.2H3L6.8-2.2L.2 5.4Z" fill="#c41422" stroke="#70101a" stroke-width=".5"/><path d="M-6.8-2.2H6.8" stroke="#f07080" stroke-width=".5"/><path d="M-3-5.2L0-2.2L3-5.2" stroke="#f07080" stroke-width=".5" fill="none"/><circle cx="4" cy="3.6" r="2.3" fill="#fff" stroke="#a01018" stroke-width="1.3"/></g>
<circle cx="8.2" cy="547.3" r="3.6" fill="#f8f8f8" stroke="#9a9a9a" stroke-width=".8"/><path d="M8.2 545.2V548M8.2 549V549.8" stroke="#777" stroke-width=".9"/>
<circle cx="24.2" cy="547.3" r="3.6" fill="#f8f8f8" stroke="#9a9a9a" stroke-width=".8"/><path d="M24.2 546.5V549.6M24.2 544.8V545.6" stroke="#666" stroke-width=".9"/>
<line x1="34.5" y1="544" x2="34.5" y2="551" stroke="#bbb" stroke-width="1"/>
<text x="41" y="550.2" font-size="8" textLength="228.5" lengthAdjust="spacingAndGlyphs" fill="#2c2c2c">Drag cursor to zoom.&#160; Up is in, down is out. Shift to change Field of View.</text>
<line x1="854.5" y1="544" x2="854.5" y2="551" stroke="#bbb" stroke-width="1"/>
<text x="860.3" y="550.2" font-size="8" textLength="39.1" lengthAdjust="spacingAndGlyphs" fill="#2c2c2c">Field of View</text>
<rect x="904" y="542" width="106.7" height="12.5" fill="#fff" stroke="#b4b4b4" stroke-width="1"/>
<text x="907" y="550.4" font-size="8" textLength="31.5" lengthAdjust="spacingAndGlyphs" fill="#2c2c2c">50.00 deg.</text>
<path d="M1019 553L1021 551M1016 553L1021 548" stroke="#bbb" stroke-width="1"/>
<g transform="translate(998.5,273.5) scale(0.9)"><path d="M-.5 1.5L-6 7" stroke="#111" stroke-width="2" stroke-linecap="round"/><circle cx="2" cy="-1.5" r="3.6" fill="#9cc4ea" stroke="#2a3a50" stroke-width="1.1"/><circle cx="1" cy="-2.5" r="1.2" fill="#d4e8fa"/></g>
<rect x="0.5" y="0.5" width="1023" height="554" fill="none" stroke="#a8a8a8" stroke-width="1"/></svg>
</body></html>
